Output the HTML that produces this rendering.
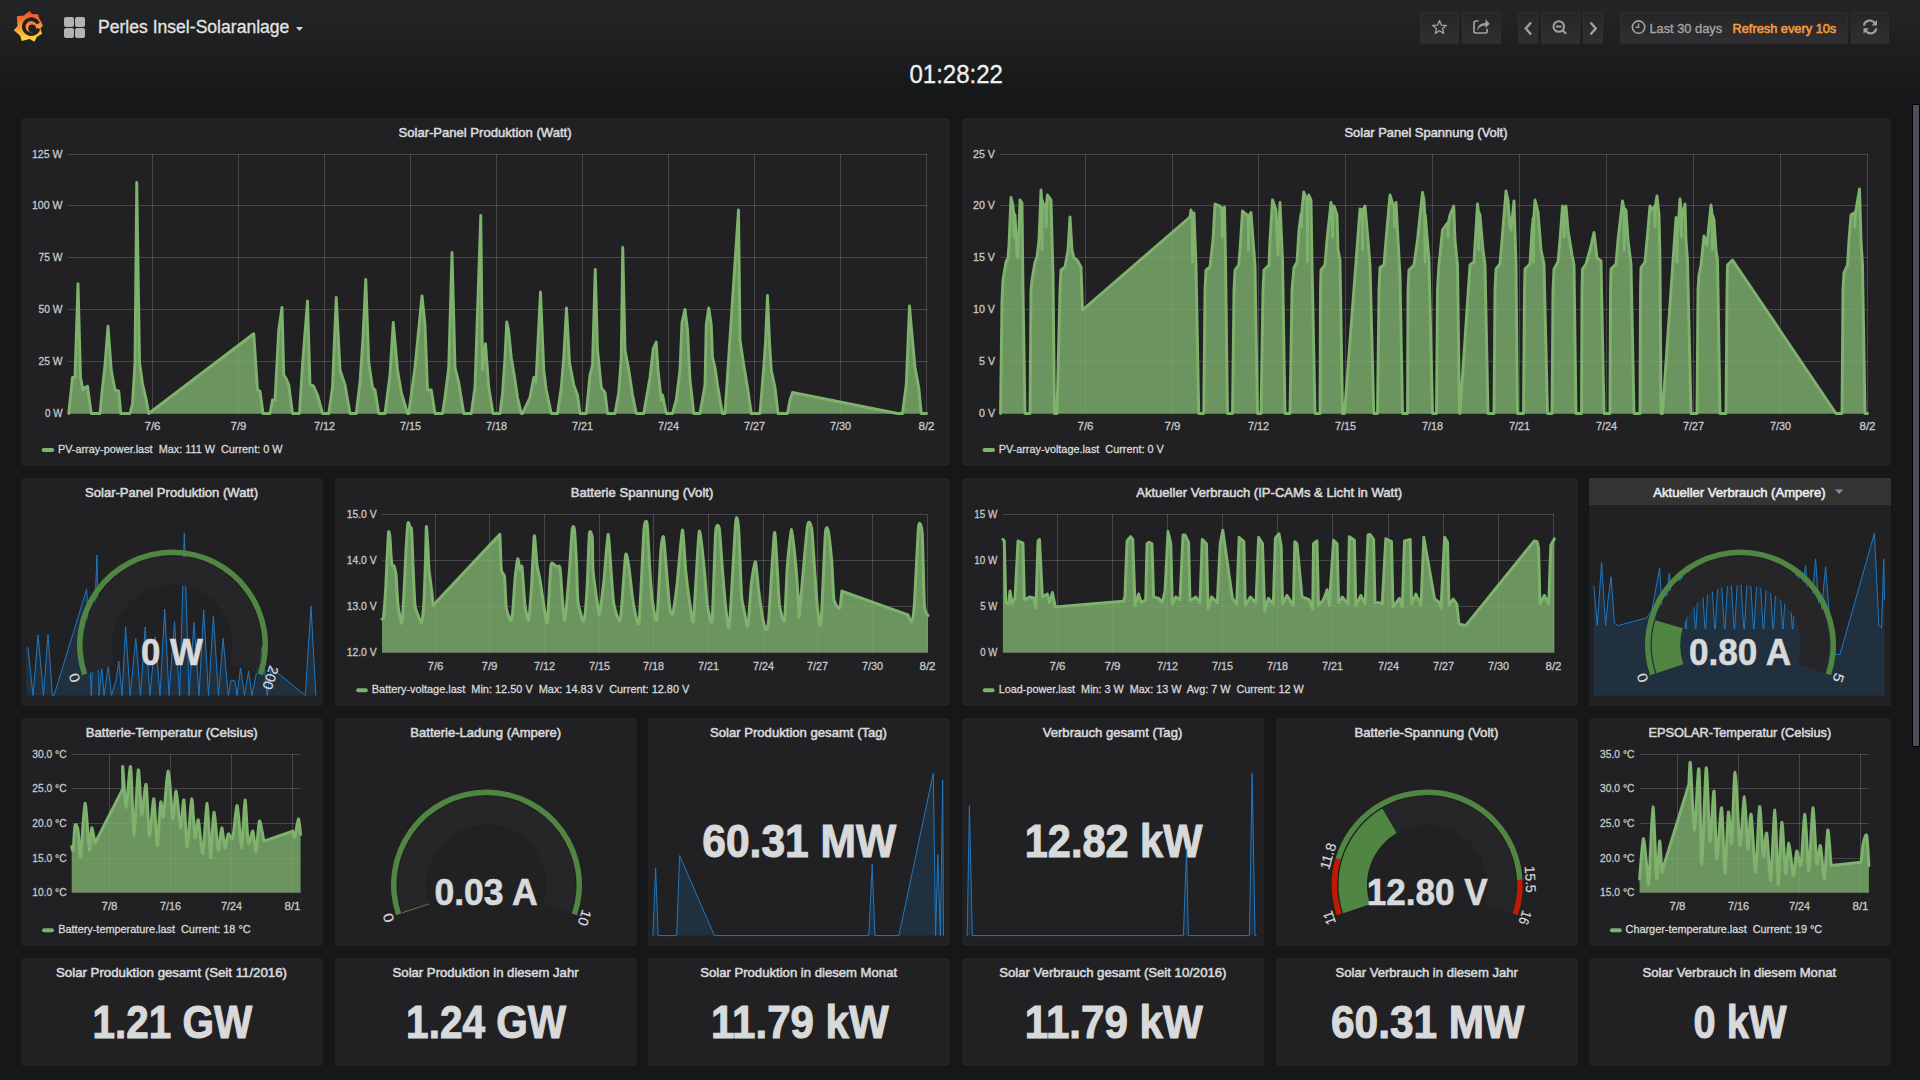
<!DOCTYPE html>
<html><head><meta charset="utf-8"><title>Perles Insel-Solaranlage - Grafana</title>
<style>
html,body{margin:0;padding:0;}
body{width:1920px;height:1080px;overflow:hidden;position:relative;background:#161719;
 background-image:linear-gradient(180deg,#222426 10px,#161719 100px);font-family:"Liberation Sans", sans-serif;}
.abs{position:absolute;}
.panel{position:absolute;background:#212124;border:1px solid #141414;border-radius:3px;overflow:hidden;}
.panel svg{position:absolute;left:0;top:0;}
svg text{font-family:"Liberation Sans", sans-serif;white-space:pre;}
.btn{position:absolute;top:12px;height:30px;border:1px solid #2f2f32;border-radius:2px;
 background:linear-gradient(180deg,#262628,#303033);}
.scroll{position:absolute;left:1912px;top:104px;width:6px;height:641px;border:1px solid #000;border-radius:1px;
 background:linear-gradient(90deg,#474c62,#505053);}
</style></head><body>
<div class="navbar"><svg class="abs" style="left:10px;top:8px" width="38" height="38" viewBox="0 0 1080 1080">
<defs><linearGradient id="lg" x1="0" y1="0.08" x2="0" y2="0.9"><stop offset="0" stop-color="#f4552c"/><stop offset="1" stop-color="#fdd235"/></linearGradient>
<clipPath id="gc"><path d="M555,85 L625,170 L795,180 L830,300 L900,420 L935,500 L865,580 L915,730 L770,815 L690,960 L560,880 L330,935 L290,790 L110,630 L215,515 L195,235 L390,215 Z"/></clipPath></defs>
<path fill="url(#lg)" d="M555,85 L625,170 L795,180 L830,300 L900,420 L935,500 L865,580 L915,730 L770,815 L690,960 L560,880 L330,935 L290,790 L110,630 L215,515 L195,235 L390,215 Z"/>
<g clip-path="url(#gc)" fill="#202123">
<path d="M845.17,418.01 A265,265 0 1 0 860.97,598.59 L759.55,571.41 A160,160 0 1 1 750.01,462.38 Z"/>
<circle cx="630" cy="580" r="110"/>
<path d="M796.43,614.08 A175,175 0 0 1 684.08,726.43 L660.9,655.11 A100,100 0 0 0 725.11,590.9 Z"/>
</g>
</svg><svg class="abs" style="left:64px;top:17px" width="21" height="21" viewBox="0 0 21 21" fill="#b3b3b3">
<rect x="0" y="0" width="10" height="10" rx="2"/><rect x="11" y="0" width="10" height="10" rx="2"/>
<rect x="0" y="11" width="10" height="10" rx="2"/><rect x="11" y="11" width="10" height="10" rx="2"/></svg><div class="btn" style="left:1420px;width:37px"></div><div class="btn" style="left:1462px;width:37px"></div><div class="btn" style="left:1518px;width:18px"></div><div class="btn" style="left:1541px;width:37px"></div><div class="btn" style="left:1583px;width:18px"></div><div class="btn" style="left:1620px;width:226px"></div><div class="btn" style="left:1851px;width:36px"></div><svg class="abs" style="left:0;top:0" width="1920" height="100" viewBox="0 0 1920 100"><text x="98" y="32.8" font-size="18" font-weight="400" fill="#e3e3e3" stroke="#e3e3e3" stroke-width="0.3" textLength="191.4" lengthAdjust="spacingAndGlyphs">Perles Insel-Solaranlage</text><path d="M296,27 L303,27 L299.5,31 Z" fill="#d8d9da"/><text x="909.4" y="83.1" font-size="26" font-weight="400" fill="#f0f0f0" stroke="#f0f0f0" stroke-width="0.3" textLength="93.6" lengthAdjust="spacingAndGlyphs">01:28:22</text><path d="M1439.5,20.5 L1441.4,25.2 L1446.3,25.5 L1442.5,28.6 L1443.7,33.4 L1439.5,30.7 L1435.3,33.4 L1436.5,28.6 L1432.7,25.5 L1437.6,25.2 Z" fill="none" stroke="#a0a0a0" stroke-width="1.3" stroke-linejoin="round"/><path d="M1478.5,21 H1475.8 Q1474,21 1474,22.8 V31.2 Q1474,33 1475.8,33 H1485.3 Q1487.1,33 1487.1,31.2 V28.8" fill="none" stroke="#a0a0a0" stroke-width="1.7"/><path d="M1477.3,30.8 C1477.3,25.8 1480.3,23 1485.5,23 V19.2 L1489.6,23.7 L1485.5,28.2 V25.6 C1481.5,25.6 1478.8,27.2 1477.3,30.8 Z" fill="#a0a0a0"/><path d="M1531,22.5 L1525.8,28.5 L1531,34.5" fill="none" stroke="#a0a0a0" stroke-width="2.4"/><path d="M1590.5,22.5 L1595.7,28.5 L1590.5,34.5" fill="none" stroke="#a0a0a0" stroke-width="2.4"/><circle cx="1558.8" cy="26.5" r="5.3" fill="none" stroke="#a0a0a0" stroke-width="2"/><path d="M1556,26.5 h5.6 M1562.5,30.2 l3.6,3.6" stroke="#a0a0a0" stroke-width="2"/><circle cx="1638.6" cy="27.1" r="6.2" fill="none" stroke="#a0a0a0" stroke-width="1.6"/><path d="M1638.6,23.5 v3.8 h-3" fill="none" stroke="#a0a0a0" stroke-width="1.4"/><text x="1649.4" y="32.75" font-size="12.5" font-weight="400" fill="#a7a7a7" stroke="#a7a7a7" stroke-width="0.3" textLength="72.8" lengthAdjust="spacingAndGlyphs">Last 30 days</text><text x="1732.5" y="32.75" font-size="12.5" font-weight="400" fill="#f99a3a" stroke="#f99a3a" stroke-width="0.55" textLength="103.75" lengthAdjust="spacingAndGlyphs">Refresh every 10s</text><path d="M1864,25.5 A5.8,5.8 0 0 1 1874.8,23.5" fill="none" stroke="#a0a0a0" stroke-width="2.2"/><path d="M1877,20 v5.5 h-5.5 Z" fill="#a0a0a0"/><path d="M1876.3,28.5 A5.8,5.8 0 0 1 1865.5,30.3" fill="none" stroke="#a0a0a0" stroke-width="2.2"/><path d="M1863.5,33.8 v-5.5 h5.5 Z" fill="#a0a0a0"/></svg></div>
<div class="panel" style="left:20px;top:117px;width:929px;height:348px"><svg width="929" height="348" viewBox="21 118 929 348"><text x="398.5" y="137" font-size="13" font-weight="400" fill="#d8d9da" stroke="#d8d9da" stroke-width="0.55" textLength="173" lengthAdjust="spacingAndGlyphs">Solar-Panel Produktion (Watt)</text><path d="M68,154.5 H927 M68,205.5 H927 M68,257.5 H927 M68,309.5 H927 M68,361.5 H927 M68,413.5 H927" stroke="rgba(255,255,255,0.17)" stroke-width="1" fill="none"/>
<path d="M152.5,154 V414 M238.5,154 V414 M324.5,154 V414 M410.5,154 V414 M496.5,154 V414 M582.5,154 V414 M668.5,154 V414 M754.5,154 V414 M840.5,154 V414 M926.5,154 V414" stroke="rgba(255,255,255,0.17)" stroke-width="1" fill="none"/>
<path d="M68.75,413.5 L68.75,413.5 L72.5,377.5 L75,377.5 L78,283.75 L80.5,377.5 L83,390 L85,387.5 L87.5,386.25 L91.25,413.5 L100,413.5 L102,392.5 L105,365 L108,326.25 L111.25,370 L115,390 L118.75,391.25 L120.75,413.5 L130,413.5 L132.5,403.75 L135,362.5 L136.75,182.5 L139.5,362.5 L142.5,383.75 L146.25,400 L148.75,413.5 L253.75,333.75 L257.5,390 L260,391 L263,413.5 L270,413.5 L272.5,400 L275,400 L278.75,330 L282,307.5 L283.75,375 L286.25,378.75 L288.75,385 L292.5,413.5 L299.5,413.5 L302.5,365 L307.5,301 L310,385 L313.5,386 L317.5,395 L322.5,413.5 L328.75,413.5 L332.5,387.5 L336.25,297.5 L340,370 L345,385 L350,413.5 L356.25,413.5 L360,382.5 L363,337.5 L365.75,279.5 L368.75,362.5 L372.5,387.5 L375,390 L378.75,413.5 L385,413.5 L390,375 L393.25,322.5 L397.5,370 L401.25,392.5 L407.5,413.5 L408.75,413.5 L415,367.5 L422,296 L425,325 L427.5,390 L431.25,390 L435,413.5 L442.5,413.5 L445,397.5 L448.75,367.5 L452,252.5 L455,367.5 L458.75,382.5 L463.75,413.5 L471.25,413.5 L475,387.5 L480.75,215.5 L482.5,370 L485.5,343.75 L488.75,387.5 L493,413.5 L500,413.5 L502.5,393.75 L505,357.5 L506.75,322 L508.5,330 L511.25,357.5 L515,380 L517.5,397.5 L521.25,413.5 L522.5,413.5 L530,397.5 L533.75,377.5 L536,382 L540.5,292 L543.75,370 L546.25,390 L551.25,413.5 L557.5,413.5 L561.25,387.5 L563.75,357.5 L566.5,308 L569.5,362.5 L573.75,385 L577.5,395 L580,413.5 L586.25,413.5 L590,375 L592.5,365 L595.25,269.5 L597.5,350 L601.25,387.5 L605,392.5 L607.5,413.5 L615,413.5 L618.75,392.5 L621.25,357.5 L622.75,247.5 L625,350 L628.75,370 L632.5,395 L636.25,413.5 L643.75,413.5 L650,377.5 L653.25,348.75 L656.25,342 L658,370 L661.25,400 L662.5,395 L666.25,413.5 L672.5,413.5 L676.25,400 L680,370 L682,322.5 L685,309.5 L687.5,330 L690,380 L693.75,413.5 L700,413.5 L705,385 L706.25,325 L708.75,308 L711.25,325 L712.5,357.5 L715,367.5 L717.5,385 L720,400 L722.5,413.5 L725,413.5 L738.5,210 L740,340 L743.75,365 L747.5,387.5 L751.25,413.5 L760,413.5 L763.75,367.5 L765.5,342.5 L767.5,295.5 L769.5,342.5 L771.25,370 L775,387.5 L778,413.5 L787.5,413.5 L790,400 L792.5,392.5 L897.5,413.5 L902.5,413.5 L906.25,385 L909.5,306 L912,335 L915,367.5 L918.75,387.5 L921.25,413.5 L926.5,413.5 L926.5,413.5 Z" fill="rgba(126,178,109,0.8)"/>
<path d="M68.75,413.5 L72.5,377.5 L75,377.5 L78,283.75 L80.5,377.5 L83,390 L85,387.5 L87.5,386.25 L91.25,413.5 L100,413.5 L102,392.5 L105,365 L108,326.25 L111.25,370 L115,390 L118.75,391.25 L120.75,413.5 L130,413.5 L132.5,403.75 L135,362.5 L136.75,182.5 L139.5,362.5 L142.5,383.75 L146.25,400 L148.75,413.5 L253.75,333.75 L257.5,390 L260,391 L263,413.5 L270,413.5 L272.5,400 L275,400 L278.75,330 L282,307.5 L283.75,375 L286.25,378.75 L288.75,385 L292.5,413.5 L299.5,413.5 L302.5,365 L307.5,301 L310,385 L313.5,386 L317.5,395 L322.5,413.5 L328.75,413.5 L332.5,387.5 L336.25,297.5 L340,370 L345,385 L350,413.5 L356.25,413.5 L360,382.5 L363,337.5 L365.75,279.5 L368.75,362.5 L372.5,387.5 L375,390 L378.75,413.5 L385,413.5 L390,375 L393.25,322.5 L397.5,370 L401.25,392.5 L407.5,413.5 L408.75,413.5 L415,367.5 L422,296 L425,325 L427.5,390 L431.25,390 L435,413.5 L442.5,413.5 L445,397.5 L448.75,367.5 L452,252.5 L455,367.5 L458.75,382.5 L463.75,413.5 L471.25,413.5 L475,387.5 L480.75,215.5 L482.5,370 L485.5,343.75 L488.75,387.5 L493,413.5 L500,413.5 L502.5,393.75 L505,357.5 L506.75,322 L508.5,330 L511.25,357.5 L515,380 L517.5,397.5 L521.25,413.5 L522.5,413.5 L530,397.5 L533.75,377.5 L536,382 L540.5,292 L543.75,370 L546.25,390 L551.25,413.5 L557.5,413.5 L561.25,387.5 L563.75,357.5 L566.5,308 L569.5,362.5 L573.75,385 L577.5,395 L580,413.5 L586.25,413.5 L590,375 L592.5,365 L595.25,269.5 L597.5,350 L601.25,387.5 L605,392.5 L607.5,413.5 L615,413.5 L618.75,392.5 L621.25,357.5 L622.75,247.5 L625,350 L628.75,370 L632.5,395 L636.25,413.5 L643.75,413.5 L650,377.5 L653.25,348.75 L656.25,342 L658,370 L661.25,400 L662.5,395 L666.25,413.5 L672.5,413.5 L676.25,400 L680,370 L682,322.5 L685,309.5 L687.5,330 L690,380 L693.75,413.5 L700,413.5 L705,385 L706.25,325 L708.75,308 L711.25,325 L712.5,357.5 L715,367.5 L717.5,385 L720,400 L722.5,413.5 L725,413.5 L738.5,210 L740,340 L743.75,365 L747.5,387.5 L751.25,413.5 L760,413.5 L763.75,367.5 L765.5,342.5 L767.5,295.5 L769.5,342.5 L771.25,370 L775,387.5 L778,413.5 L787.5,413.5 L790,400 L792.5,392.5 L897.5,413.5 L902.5,413.5 L906.25,385 L909.5,306 L912,335 L915,367.5 L918.75,387.5 L921.25,413.5 L926.5,413.5" stroke="#7eb26d" stroke-width="2.9" fill="none" stroke-linejoin="round" stroke-linecap="round"/>
<text x="32" y="157.8" font-size="11.5" font-weight="400" fill="#c8c9ca" stroke="#c8c9ca" stroke-width="0.3" textLength="30.5" lengthAdjust="spacingAndGlyphs">125 W</text>
<text x="32" y="208.8" font-size="11.5" font-weight="400" fill="#c8c9ca" stroke="#c8c9ca" stroke-width="0.3" textLength="30.5" lengthAdjust="spacingAndGlyphs">100 W</text>
<text x="38.5" y="260.8" font-size="11.5" font-weight="400" fill="#c8c9ca" stroke="#c8c9ca" stroke-width="0.3" textLength="24" lengthAdjust="spacingAndGlyphs">75 W</text>
<text x="38.5" y="312.8" font-size="11.5" font-weight="400" fill="#c8c9ca" stroke="#c8c9ca" stroke-width="0.3" textLength="24" lengthAdjust="spacingAndGlyphs">50 W</text>
<text x="38.5" y="364.8" font-size="11.5" font-weight="400" fill="#c8c9ca" stroke="#c8c9ca" stroke-width="0.3" textLength="24" lengthAdjust="spacingAndGlyphs">25 W</text>
<text x="45" y="416.8" font-size="11.5" font-weight="400" fill="#c8c9ca" stroke="#c8c9ca" stroke-width="0.3" textLength="17.5" lengthAdjust="spacingAndGlyphs">0 W</text>
<text x="144.5" y="430" font-size="11.5" font-weight="400" fill="#c8c9ca" stroke="#c8c9ca" stroke-width="0.3" textLength="16" lengthAdjust="spacingAndGlyphs">7/6</text>
<text x="230.5" y="430" font-size="11.5" font-weight="400" fill="#c8c9ca" stroke="#c8c9ca" stroke-width="0.3" textLength="16" lengthAdjust="spacingAndGlyphs">7/9</text>
<text x="314" y="430" font-size="11.5" font-weight="400" fill="#c8c9ca" stroke="#c8c9ca" stroke-width="0.3" textLength="21" lengthAdjust="spacingAndGlyphs">7/12</text>
<text x="400" y="430" font-size="11.5" font-weight="400" fill="#c8c9ca" stroke="#c8c9ca" stroke-width="0.3" textLength="21" lengthAdjust="spacingAndGlyphs">7/15</text>
<text x="486" y="430" font-size="11.5" font-weight="400" fill="#c8c9ca" stroke="#c8c9ca" stroke-width="0.3" textLength="21" lengthAdjust="spacingAndGlyphs">7/18</text>
<text x="572" y="430" font-size="11.5" font-weight="400" fill="#c8c9ca" stroke="#c8c9ca" stroke-width="0.3" textLength="21" lengthAdjust="spacingAndGlyphs">7/21</text>
<text x="658" y="430" font-size="11.5" font-weight="400" fill="#c8c9ca" stroke="#c8c9ca" stroke-width="0.3" textLength="21" lengthAdjust="spacingAndGlyphs">7/24</text>
<text x="744" y="430" font-size="11.5" font-weight="400" fill="#c8c9ca" stroke="#c8c9ca" stroke-width="0.3" textLength="21" lengthAdjust="spacingAndGlyphs">7/27</text>
<text x="830" y="430" font-size="11.5" font-weight="400" fill="#c8c9ca" stroke="#c8c9ca" stroke-width="0.3" textLength="21" lengthAdjust="spacingAndGlyphs">7/30</text>
<text x="918.5" y="430" font-size="11.5" font-weight="400" fill="#c8c9ca" stroke="#c8c9ca" stroke-width="0.3" textLength="16" lengthAdjust="spacingAndGlyphs">8/2</text><rect x="41.7" y="448" width="12.5" height="4" rx="2" fill="#7eb26d"/><text x="57.9" y="453" font-size="11.5" font-weight="400" fill="#d8d9da" stroke="#d8d9da" stroke-width="0.3" textLength="224.6" lengthAdjust="spacingAndGlyphs">PV-array-power.last  Max: 111 W  Current: 0 W</text></svg></div>
<div class="panel" style="left:961px;top:117px;width:929px;height:348px"><svg width="929" height="348" viewBox="962 118 929 348"><text x="1344.5" y="137" font-size="13" font-weight="400" fill="#d8d9da" stroke="#d8d9da" stroke-width="0.55" textLength="163" lengthAdjust="spacingAndGlyphs">Solar Panel Spannung (Volt)</text><path d="M1000,154.5 H1868 M1000,205.5 H1868 M1000,257.5 H1868 M1000,309.5 H1868 M1000,361.5 H1868 M1000,413.5 H1868" stroke="rgba(255,255,255,0.17)" stroke-width="1" fill="none"/>
<path d="M1085.5,154 V414 M1172.5,154 V414 M1258.5,154 V414 M1345.5,154 V414 M1432.5,154 V414 M1519.5,154 V414 M1606.5,154 V414 M1693.5,154 V414 M1780.5,154 V414 M1867.5,154 V414" stroke="rgba(255,255,255,0.17)" stroke-width="1" fill="none"/>
<path d="M1000.5,413.5 L1000.5,413.5 L1002,300 L1003,280 L1006,262 L1008,258 L1009,245 L1011,197.5 L1013,206 L1013.7,213.5 L1014,237 L1014.3,213.5 L1015,215 L1017,255 L1018,258 L1020,200 L1022,203 L1023,290 L1025,413.5 L1030,413.5 L1031,290 L1032,280 L1035,262 L1037,257 L1039,240 L1041,190 L1041.7,200.5 L1042,250 L1042.3,200.5 L1043,205 L1045,207 L1045.95,204 L1046.25,227 L1046.55,204 L1047.5,195 L1051,200 L1053,275 L1054.5,413.5 L1057,413.5 L1060,290 L1061,270 L1065,267 L1068,250 L1070,217 L1072,250 L1074,258 L1077,260 L1081,267 L1082.5,310 L1190,217 L1191,210 L1192.2,214.5 L1192.5,262 L1192.8,214.5 L1194,213 L1196,265 L1198.75,413.5 L1203.75,413.5 L1205,290 L1206,270 L1210,267 L1213,240 L1215,204 L1220,206 L1221.95,209.5 L1222.25,237 L1222.55,209.5 L1224.5,207 L1225.5,260 L1227.5,413.5 L1232.5,413.5 L1234,290 L1235,270 L1238.75,265 L1240,250 L1242.5,211 L1246,214 L1248.2,216.25 L1248.5,250 L1248.8,216.25 L1251,212.5 L1253,240 L1255,265 L1257.5,413.5 L1261,413.5 L1263,290 L1264,270 L1269,265 L1270,240 L1272.5,200 L1276,210 L1278,255 L1280,202.5 L1282.5,260 L1285,413.5 L1290,413.5 L1292,290 L1294,267.5 L1297,262 L1299,230 L1301.08,214 L1301.38,227 L1301.67,214 L1303.75,192 L1306,198 L1307.08,199.5 L1307.38,262 L1307.67,199.5 L1308.75,195 L1311,200 L1312,262.5 L1315,413.5 L1320,413.5 L1320.5,290 L1321,270 L1325,265 L1327,240 L1331,202.5 L1332.2,207.25 L1332.5,237 L1332.8,207.25 L1334,206 L1337,215 L1338,250 L1340,260 L1342.5,413.5 L1344.5,413.5 L1360,209 L1362.2,210.5 L1362.5,250 L1362.8,210.5 L1365,206 L1368,240 L1370,265 L1373.75,413.5 L1377.5,413.5 L1379,290 L1380,267.5 L1384,265 L1386,240 L1390,195 L1393,205 L1394.2,206.75 L1394.5,227 L1394.8,206.75 L1396,202.5 L1398,240 L1400,275 L1402.5,413.5 L1407.5,413.5 L1408,290 L1409,270 L1414,265 L1417.5,240 L1422.5,192.5 L1424,200 L1424.7,215 L1425,262 L1425.3,215 L1426,224 L1429,260 L1432.5,413.5 L1436.5,413.5 L1437.5,290 L1438.75,267.5 L1442.5,230 L1446,225 L1447.7,223 L1448,237 L1448.3,223 L1450,215 L1453.75,206 L1455,240 L1457.5,265 L1459.5,413.5 L1460,413.5 L1470,265 L1474,262 L1477.5,204 L1478.45,212.5 L1478.75,250 L1479.05,212.5 L1480,215 L1483,250 L1485,265 L1488,413.5 L1494,413.5 L1495,290 L1496,269 L1500,264 L1502,240 L1506,191 L1508,200 L1509.2,218 L1509.5,227 L1509.8,218 L1511,230 L1514,201 L1516,265 L1517.5,413.5 L1523.5,413.5 L1524.5,290 L1525,269 L1530,264 L1532,230 L1533.2,218 L1533.5,262 L1533.8,218 L1535,200 L1538,212 L1541,250 L1544,264 L1547.5,413.5 L1552,413.5 L1553,290 L1554,269 L1558,262 L1560,240 L1562.5,206 L1563.95,209 L1564.25,237 L1564.55,209 L1566,206 L1568,230 L1572,255 L1574,265 L1576,413.5 L1581.5,413.5 L1582,290 L1582.5,269 L1586,264 L1590,250 L1594,232.5 L1597,258 L1601,261 L1604,413.5 L1610,413.5 L1610.5,290 L1611,269 L1616,264 L1618,240 L1622.5,201 L1623.95,208.5 L1624.25,250 L1624.55,208.5 L1626,210 L1628,240 L1631,264 L1634,413.5 L1640,413.5 L1640.5,290 L1641,267.5 L1645,262 L1647,240 L1650,206 L1653,210 L1654.7,206 L1655,227 L1655.3,206 L1657,196 L1659,215 L1660,260 L1661,413.5 L1662.5,413.5 L1676,217.5 L1676.7,226.75 L1677,262 L1677.3,226.75 L1678,230 L1680,199 L1681.2,210 L1681.5,237 L1681.8,210 L1683,215 L1685,204 L1686,240 L1687.5,260 L1691,413.5 L1697,413.5 L1698,290 L1699,275 L1701,265 L1704,236 L1707,245 L1711,205 L1712.2,215.5 L1712.5,250 L1712.8,215.5 L1714,220 L1716,250 L1717.5,260 L1720,413.5 L1726,413.5 L1727,290 L1727.5,265 L1732.5,260 L1836,413.5 L1842,413.5 L1843,290 L1844,272.5 L1847.5,265 L1849,240 L1851,215 L1854,213 L1854.7,214.5 L1855,227 L1855.3,214.5 L1856,210 L1859.5,189 L1861,240 L1862.5,265 L1865,413.5 L1867.5,413.5 L1867.5,413.5 Z" fill="rgba(126,178,109,0.8)"/>
<path d="M1000.5,413.5 L1002,300 L1003,280 L1006,262 L1008,258 L1009,245 L1011,197.5 L1013,206 L1013.7,213.5 L1014,237 L1014.3,213.5 L1015,215 L1017,255 L1018,258 L1020,200 L1022,203 L1023,290 L1025,413.5 L1030,413.5 L1031,290 L1032,280 L1035,262 L1037,257 L1039,240 L1041,190 L1041.7,200.5 L1042,250 L1042.3,200.5 L1043,205 L1045,207 L1045.95,204 L1046.25,227 L1046.55,204 L1047.5,195 L1051,200 L1053,275 L1054.5,413.5 L1057,413.5 L1060,290 L1061,270 L1065,267 L1068,250 L1070,217 L1072,250 L1074,258 L1077,260 L1081,267 L1082.5,310 L1190,217 L1191,210 L1192.2,214.5 L1192.5,262 L1192.8,214.5 L1194,213 L1196,265 L1198.75,413.5 L1203.75,413.5 L1205,290 L1206,270 L1210,267 L1213,240 L1215,204 L1220,206 L1221.95,209.5 L1222.25,237 L1222.55,209.5 L1224.5,207 L1225.5,260 L1227.5,413.5 L1232.5,413.5 L1234,290 L1235,270 L1238.75,265 L1240,250 L1242.5,211 L1246,214 L1248.2,216.25 L1248.5,250 L1248.8,216.25 L1251,212.5 L1253,240 L1255,265 L1257.5,413.5 L1261,413.5 L1263,290 L1264,270 L1269,265 L1270,240 L1272.5,200 L1276,210 L1278,255 L1280,202.5 L1282.5,260 L1285,413.5 L1290,413.5 L1292,290 L1294,267.5 L1297,262 L1299,230 L1301.08,214 L1301.38,227 L1301.67,214 L1303.75,192 L1306,198 L1307.08,199.5 L1307.38,262 L1307.67,199.5 L1308.75,195 L1311,200 L1312,262.5 L1315,413.5 L1320,413.5 L1320.5,290 L1321,270 L1325,265 L1327,240 L1331,202.5 L1332.2,207.25 L1332.5,237 L1332.8,207.25 L1334,206 L1337,215 L1338,250 L1340,260 L1342.5,413.5 L1344.5,413.5 L1360,209 L1362.2,210.5 L1362.5,250 L1362.8,210.5 L1365,206 L1368,240 L1370,265 L1373.75,413.5 L1377.5,413.5 L1379,290 L1380,267.5 L1384,265 L1386,240 L1390,195 L1393,205 L1394.2,206.75 L1394.5,227 L1394.8,206.75 L1396,202.5 L1398,240 L1400,275 L1402.5,413.5 L1407.5,413.5 L1408,290 L1409,270 L1414,265 L1417.5,240 L1422.5,192.5 L1424,200 L1424.7,215 L1425,262 L1425.3,215 L1426,224 L1429,260 L1432.5,413.5 L1436.5,413.5 L1437.5,290 L1438.75,267.5 L1442.5,230 L1446,225 L1447.7,223 L1448,237 L1448.3,223 L1450,215 L1453.75,206 L1455,240 L1457.5,265 L1459.5,413.5 L1460,413.5 L1470,265 L1474,262 L1477.5,204 L1478.45,212.5 L1478.75,250 L1479.05,212.5 L1480,215 L1483,250 L1485,265 L1488,413.5 L1494,413.5 L1495,290 L1496,269 L1500,264 L1502,240 L1506,191 L1508,200 L1509.2,218 L1509.5,227 L1509.8,218 L1511,230 L1514,201 L1516,265 L1517.5,413.5 L1523.5,413.5 L1524.5,290 L1525,269 L1530,264 L1532,230 L1533.2,218 L1533.5,262 L1533.8,218 L1535,200 L1538,212 L1541,250 L1544,264 L1547.5,413.5 L1552,413.5 L1553,290 L1554,269 L1558,262 L1560,240 L1562.5,206 L1563.95,209 L1564.25,237 L1564.55,209 L1566,206 L1568,230 L1572,255 L1574,265 L1576,413.5 L1581.5,413.5 L1582,290 L1582.5,269 L1586,264 L1590,250 L1594,232.5 L1597,258 L1601,261 L1604,413.5 L1610,413.5 L1610.5,290 L1611,269 L1616,264 L1618,240 L1622.5,201 L1623.95,208.5 L1624.25,250 L1624.55,208.5 L1626,210 L1628,240 L1631,264 L1634,413.5 L1640,413.5 L1640.5,290 L1641,267.5 L1645,262 L1647,240 L1650,206 L1653,210 L1654.7,206 L1655,227 L1655.3,206 L1657,196 L1659,215 L1660,260 L1661,413.5 L1662.5,413.5 L1676,217.5 L1676.7,226.75 L1677,262 L1677.3,226.75 L1678,230 L1680,199 L1681.2,210 L1681.5,237 L1681.8,210 L1683,215 L1685,204 L1686,240 L1687.5,260 L1691,413.5 L1697,413.5 L1698,290 L1699,275 L1701,265 L1704,236 L1707,245 L1711,205 L1712.2,215.5 L1712.5,250 L1712.8,215.5 L1714,220 L1716,250 L1717.5,260 L1720,413.5 L1726,413.5 L1727,290 L1727.5,265 L1732.5,260 L1836,413.5 L1842,413.5 L1843,290 L1844,272.5 L1847.5,265 L1849,240 L1851,215 L1854,213 L1854.7,214.5 L1855,227 L1855.3,214.5 L1856,210 L1859.5,189 L1861,240 L1862.5,265 L1865,413.5 L1867.5,413.5" stroke="#7eb26d" stroke-width="2.9" fill="none" stroke-linejoin="round" stroke-linecap="round"/>
<text x="973" y="157.8" font-size="11.5" font-weight="400" fill="#c8c9ca" stroke="#c8c9ca" stroke-width="0.3" textLength="22" lengthAdjust="spacingAndGlyphs">25 V</text>
<text x="973" y="208.8" font-size="11.5" font-weight="400" fill="#c8c9ca" stroke="#c8c9ca" stroke-width="0.3" textLength="22" lengthAdjust="spacingAndGlyphs">20 V</text>
<text x="973" y="260.8" font-size="11.5" font-weight="400" fill="#c8c9ca" stroke="#c8c9ca" stroke-width="0.3" textLength="22" lengthAdjust="spacingAndGlyphs">15 V</text>
<text x="973" y="312.8" font-size="11.5" font-weight="400" fill="#c8c9ca" stroke="#c8c9ca" stroke-width="0.3" textLength="22" lengthAdjust="spacingAndGlyphs">10 V</text>
<text x="979" y="364.8" font-size="11.5" font-weight="400" fill="#c8c9ca" stroke="#c8c9ca" stroke-width="0.3" textLength="16" lengthAdjust="spacingAndGlyphs">5 V</text>
<text x="979" y="416.8" font-size="11.5" font-weight="400" fill="#c8c9ca" stroke="#c8c9ca" stroke-width="0.3" textLength="16" lengthAdjust="spacingAndGlyphs">0 V</text>
<text x="1077.5" y="430" font-size="11.5" font-weight="400" fill="#c8c9ca" stroke="#c8c9ca" stroke-width="0.3" textLength="16" lengthAdjust="spacingAndGlyphs">7/6</text>
<text x="1164.5" y="430" font-size="11.5" font-weight="400" fill="#c8c9ca" stroke="#c8c9ca" stroke-width="0.3" textLength="16" lengthAdjust="spacingAndGlyphs">7/9</text>
<text x="1248" y="430" font-size="11.5" font-weight="400" fill="#c8c9ca" stroke="#c8c9ca" stroke-width="0.3" textLength="21" lengthAdjust="spacingAndGlyphs">7/12</text>
<text x="1335" y="430" font-size="11.5" font-weight="400" fill="#c8c9ca" stroke="#c8c9ca" stroke-width="0.3" textLength="21" lengthAdjust="spacingAndGlyphs">7/15</text>
<text x="1422" y="430" font-size="11.5" font-weight="400" fill="#c8c9ca" stroke="#c8c9ca" stroke-width="0.3" textLength="21" lengthAdjust="spacingAndGlyphs">7/18</text>
<text x="1509" y="430" font-size="11.5" font-weight="400" fill="#c8c9ca" stroke="#c8c9ca" stroke-width="0.3" textLength="21" lengthAdjust="spacingAndGlyphs">7/21</text>
<text x="1596" y="430" font-size="11.5" font-weight="400" fill="#c8c9ca" stroke="#c8c9ca" stroke-width="0.3" textLength="21" lengthAdjust="spacingAndGlyphs">7/24</text>
<text x="1683" y="430" font-size="11.5" font-weight="400" fill="#c8c9ca" stroke="#c8c9ca" stroke-width="0.3" textLength="21" lengthAdjust="spacingAndGlyphs">7/27</text>
<text x="1770" y="430" font-size="11.5" font-weight="400" fill="#c8c9ca" stroke="#c8c9ca" stroke-width="0.3" textLength="21" lengthAdjust="spacingAndGlyphs">7/30</text>
<text x="1859.5" y="430" font-size="11.5" font-weight="400" fill="#c8c9ca" stroke="#c8c9ca" stroke-width="0.3" textLength="16" lengthAdjust="spacingAndGlyphs">8/2</text><rect x="982.5" y="448" width="12.5" height="4" rx="2" fill="#7eb26d"/><text x="998.75" y="453" font-size="11.5" font-weight="400" fill="#d8d9da" stroke="#d8d9da" stroke-width="0.3" textLength="165" lengthAdjust="spacingAndGlyphs">PV-array-voltage.last  Current: 0 V</text></svg></div>
<div class="panel" style="left:20px;top:477px;width:302px;height:228px"><svg width="302" height="228" viewBox="21 478 302 228"><text x="85" y="497" font-size="13" font-weight="400" fill="#d8d9da" stroke="#d8d9da" stroke-width="0.55" textLength="173" lengthAdjust="spacingAndGlyphs">Solar-Panel Produktion (Watt)</text><path d="M26.2,695.5 L26.2,648 L28,648 L33,695.5 L38.1,635 L43.5,695.5 L48,634.3 L52.4,695.5 L54,695.5 L86.7,589 L91.3,695.5 L97,555 L99,695.5 L101.8,667.6 L104,695.5 L108.3,666 L111.5,695.5 L116,680 L118.8,661 L122,695.5 L125.6,627 L130.2,695.5 L135.8,638.4 L140.5,695.5 L145.2,627 L150,695.5 L155.3,636.8 L160,695.5 L164.7,609 L169,695.5 L174.5,621.4 L179.7,695.5 L184.3,533 L189,695.5 L194,622.2 L199,695.5 L203.7,610 L208.5,695.5 L213.4,615.7 L218.5,695.5 L223.1,638.4 L228.3,695.5 L231,680 L235,681 L237,695.5 L240.5,667.6 L244.5,695.5 L248.6,670.8 L252,695.5 L257,670 L262.3,646.5 L267.2,695.5 L271.2,667.6 L305.3,695.5 L311,606 L315.8,695.5 L315.8,695.5 Z" fill="rgba(31,118,189,0.18)"/><path d="M26.2,648 L28,648 L33,695.5 L38.1,635 L43.5,695.5 L48,634.3 L52.4,695.5 L54,695.5 L86.7,589 L91.3,695.5 L97,555 L99,695.5 L101.8,667.6 L104,695.5 L108.3,666 L111.5,695.5 L116,680 L118.8,661 L122,695.5 L125.6,627 L130.2,695.5 L135.8,638.4 L140.5,695.5 L145.2,627 L150,695.5 L155.3,636.8 L160,695.5 L164.7,609 L169,695.5 L174.5,621.4 L179.7,695.5 L184.3,533 L189,695.5 L194,622.2 L199,695.5 L203.7,610 L208.5,695.5 L213.4,615.7 L218.5,695.5 L223.1,638.4 L228.3,695.5 L231,680 L235,681 L237,695.5 L240.5,667.6 L244.5,695.5 L248.6,670.8 L252,695.5 L257,670 L262.3,646.5 L267.2,695.5 L271.2,667.6 L305.3,695.5 L311,606 L315.8,695.5" stroke="rgb(31,120,193)" stroke-width="1" fill="none"/><path d="M88.38,673.14 A88.7,88.7 0 1 1 256.62,673.14 L229.68,664.13 A60.3,60.3 0 1 0 115.32,664.13 Z" fill="#262628"/>
<path d="M81.94,675.3 A95.5,95.5 0 1 1 263.06,675.3 L257.85,673.56 A90,90 0 1 0 87.15,673.56 Z" fill="#508642"/>
<g transform="translate(74.35,677.84) rotate(-108.5)"><text x="-4.5" y="5" font-size="14" font-weight="400" fill="#d8d9da" stroke="#d8d9da" stroke-width="0.2" textLength="9" lengthAdjust="spacingAndGlyphs">0</text></g>
<g transform="translate(270.65,677.84) rotate(108.5)"><text x="-12" y="5" font-size="14" font-weight="400" fill="#d8d9da" stroke="#d8d9da" stroke-width="0.2" textLength="24" lengthAdjust="spacingAndGlyphs">200</text></g><text x="140.9" y="664.7" font-size="36" font-weight="700" fill="#d8d9da" stroke="#d8d9da" stroke-width="0.6" textLength="61.8" lengthAdjust="spacingAndGlyphs">0 W</text></svg></div>
<div class="panel" style="left:334px;top:477px;width:615px;height:228px"><svg width="615" height="228" viewBox="335 478 615 228"><text x="570.7" y="497" font-size="13" font-weight="400" fill="#d8d9da" stroke="#d8d9da" stroke-width="0.55" textLength="142.6" lengthAdjust="spacingAndGlyphs">Batterie Spannung (Volt)</text><path d="M382,514.5 H927 M382,560.5 H927 M382,606.5 H927 M382,652.5 H927" stroke="rgba(255,255,255,0.17)" stroke-width="1" fill="none"/>
<path d="M435.5,514 V653 M489.5,514 V653 M544.5,514 V653 M599.5,514 V653 M653.5,514 V653 M708.5,514 V653 M763.5,514 V653 M817.5,514 V653 M872.5,514 V653 M927.5,514 V653" stroke="rgba(255,255,255,0.17)" stroke-width="1" fill="none"/>
<path d="M382,652.5 L382,619 C382.15,618.8 383.12,620.1 383.5,617 C383.88,613.9 385.4,593.7 385.75,588 C386.1,582.3 386.71,565.6 387,560 C387.29,554.4 388.3,534.2 388.6,532 C388.9,529.8 389.76,535.7 390,538 C390.24,540.3 390.8,552.3 391,555 C391.2,557.7 391.7,563.9 392,565 C392.3,566.1 393.6,565 394,566 C394.4,567 395.6,571.05 396,575 C396.4,578.95 397.45,600.66 398,605.5 C398.55,610.34 401,622.95 401.5,623.4 C402,623.85 402.71,613.84 403,610 C403.29,606.16 404.1,591 404.4,585 C404.7,579 405.64,556.2 406,550 C406.36,543.8 407.6,525.3 408,523 C408.4,520.7 409.64,526.3 410,527 C410.36,527.7 411.3,526.2 411.6,530 C411.9,533.8 412.66,557.45 413,565 C413.34,572.55 414.5,600.5 415,605.5 C415.5,610.5 417.34,613.28 418,615 C418.66,616.72 421,624.2 421.6,622.7 C422.2,621.2 423.61,606.27 424,600 C424.39,593.73 425.26,567.35 425.5,560 C425.74,552.65 426.15,527.5 426.4,526.5 C426.65,525.5 427.74,545.65 428,550 C428.26,554.35 428.63,565.9 429,570 C429.37,574.1 431.3,587.45 431.7,591 C432.1,594.55 432.74,602.6 433,605.5 L499.9,534.4 C500.18,541.44 500.84,565.34 501.3,569.6 C501.76,573.86 504,573.16 504.5,577 C505,580.84 505.69,603.65 506.3,608 C506.91,612.35 509.96,620.1 510.6,620.5 C511.24,620.9 512.26,616.05 512.7,612 C513.14,607.95 514.49,585.32 515,580 C515.51,574.68 517.3,559.8 517.8,558.8 C518.3,557.8 519.58,569.18 520,570 C520.42,570.82 521.5,563.45 522,567 C522.5,570.55 524.34,600.15 525,605.5 C525.66,610.85 527.95,622.35 528.6,620.5 C529.25,618.65 530.93,595.46 531.5,587 C532.07,578.54 533.75,538.1 534.3,535.9 C534.85,533.7 536.43,560.59 537,565 C537.57,569.41 539.4,576.5 540,580 C540.6,583.5 542.28,595.73 543,600 C543.72,604.27 546.42,626.03 547.2,622.7 C547.98,619.37 550.22,572.59 550.8,566.7 C551.38,560.81 552.38,563.77 553,563.8 C553.62,563.83 556.3,566.58 557,567 C557.7,567.42 559.4,563.9 560,568 C560.6,572.1 562.5,602.82 563,608 C563.5,613.18 564.36,623.5 565,619.8 C565.64,616.1 568.68,580.04 569.4,571 C570.12,561.96 571.7,533.56 572.2,529.4 C572.7,525.24 573.97,525.96 574.4,529.4 C574.83,532.84 576.14,556.54 576.5,563.8 C576.86,571.06 577.28,596.26 578,602 C578.72,607.74 582.8,622.4 583.7,621.2 C584.6,620 586.43,598.75 587,590 C587.57,581.25 588.87,538.9 589.4,533.7 C589.93,528.5 591.94,534.37 592.3,538 C592.66,541.63 592.43,563 593,570 C593.57,577 597.35,603.6 598,608 C598.65,612.4 598.9,616.8 599.5,614 C600.1,611.2 603.14,587.96 604,580 C604.86,572.04 607.4,535.4 608.1,534.4 C608.8,533.4 610.43,563.04 611,570 C611.57,576.96 612.87,599.02 613.8,604 C614.73,608.98 619.12,624.68 620.3,619.8 C621.48,614.92 624.73,560.38 625.6,555.2 C626.47,550.02 628.24,563.26 629,568 C629.76,572.74 632.2,597.13 633.2,602.6 C634.2,608.07 637.92,630.02 639,622.7 C640.08,615.38 643.19,539.3 644,529.4 C644.81,519.5 646.53,519.84 647.1,523.7 C647.67,527.56 649.15,560.11 649.7,568 C650.25,575.89 651.88,597.42 652.6,602.6 C653.32,607.78 656.06,625.16 656.9,619.8 C657.74,614.44 660.33,557.25 661,549 C661.67,540.75 663,534.5 663.6,537.3 C664.2,540.1 666.38,569.9 667,577 C667.62,584.1 669.23,604.59 669.8,608.3 C670.37,612.01 671.98,616.43 672.7,614.1 C673.42,611.77 676.03,593.4 677,585 C677.97,576.6 681.54,531.64 682.4,530.1 C683.26,528.56 684.85,562.21 685.6,569.6 C686.35,576.99 689.11,598.91 689.9,604 C690.69,609.09 692.57,627.75 693.5,620.5 C694.43,613.25 698.12,536.59 699.2,531.5 C700.28,526.41 703.5,562.35 704.3,569.6 C705.1,576.85 706.42,598.91 707.2,604 C707.98,609.09 711.25,627.75 712.1,620.5 C712.95,613.25 714.98,540.68 715.7,531.5 C716.42,522.32 718.65,525.18 719.3,528.7 C719.95,532.22 721.55,558.74 722.2,566.7 C722.85,574.66 725.08,602.41 725.8,608.3 C726.52,614.19 728.4,634.28 729.4,625.6 C730.4,616.92 734.87,531.06 735.8,521.5 C736.73,511.94 738.13,522.65 738.7,530 C739.27,537.35 740.97,587 741.5,595 C742.03,603 743.36,606.87 744,610 C744.64,613.13 747.15,629.05 747.9,626.3 C748.65,623.55 750.74,588.96 751.5,582.5 C752.26,576.04 754.78,560.85 755.5,561.7 C756.22,562.55 757.95,585.19 758.7,591 C759.45,596.81 762.26,615.92 763,619.8 C763.74,623.68 765.53,629.8 766.1,629.8 C766.67,629.8 767.87,629.48 768.7,619.8 C769.53,610.12 773.54,538.02 774.4,533 C775.26,527.98 776.79,562.35 777.3,569.6 C777.81,576.85 778.78,600.41 779.5,605.5 C780.22,610.59 783.71,624.52 784.5,620.5 C785.29,616.48 786.68,574.41 787.4,565.3 C788.12,556.19 790.84,529.13 791.7,529.4 C792.56,529.67 795.29,560.11 796,568 C796.71,575.89 798.45,603.7 798.8,608.3 C799.15,612.9 798.64,622.18 799.5,614 C800.36,605.82 806.18,535.03 807.4,526.5 C808.62,517.97 810.98,524.39 811.7,528.7 C812.42,533.01 814.02,561.64 814.6,569.6 C815.18,577.56 816.86,602.92 817.5,608.3 C818.14,613.68 820.21,630.86 821,623.4 C821.79,615.94 824.68,542.96 825.4,533.7 C826.12,524.44 827.56,527.93 828.2,530.8 C828.84,533.67 831.22,555.51 831.8,562.4 C832.38,569.29 833.21,595.11 834,599.7 C834.79,604.29 838.91,609.16 839.7,608.3 C840.49,607.44 841.46,594.54 841.9,591.1 L907.9,614.8 C908.62,616.24 910.86,622.93 911.5,622 C912.14,621.07 913.59,615.05 914.3,605.5 C915.01,595.95 917.81,533.68 918.6,526.5 C919.39,519.32 921.62,525.8 922.2,533.7 C922.78,541.6 923.82,597.32 924.4,605.5 C924.98,613.68 927.64,614.5 928,615.5 L928,652.5 Z" fill="rgba(126,178,109,0.8)"/>
<path d="M382,619 C382.15,618.8 383.12,620.1 383.5,617 C383.88,613.9 385.4,593.7 385.75,588 C386.1,582.3 386.71,565.6 387,560 C387.29,554.4 388.3,534.2 388.6,532 C388.9,529.8 389.76,535.7 390,538 C390.24,540.3 390.8,552.3 391,555 C391.2,557.7 391.7,563.9 392,565 C392.3,566.1 393.6,565 394,566 C394.4,567 395.6,571.05 396,575 C396.4,578.95 397.45,600.66 398,605.5 C398.55,610.34 401,622.95 401.5,623.4 C402,623.85 402.71,613.84 403,610 C403.29,606.16 404.1,591 404.4,585 C404.7,579 405.64,556.2 406,550 C406.36,543.8 407.6,525.3 408,523 C408.4,520.7 409.64,526.3 410,527 C410.36,527.7 411.3,526.2 411.6,530 C411.9,533.8 412.66,557.45 413,565 C413.34,572.55 414.5,600.5 415,605.5 C415.5,610.5 417.34,613.28 418,615 C418.66,616.72 421,624.2 421.6,622.7 C422.2,621.2 423.61,606.27 424,600 C424.39,593.73 425.26,567.35 425.5,560 C425.74,552.65 426.15,527.5 426.4,526.5 C426.65,525.5 427.74,545.65 428,550 C428.26,554.35 428.63,565.9 429,570 C429.37,574.1 431.3,587.45 431.7,591 C432.1,594.55 432.74,602.6 433,605.5 L499.9,534.4 C500.18,541.44 500.84,565.34 501.3,569.6 C501.76,573.86 504,573.16 504.5,577 C505,580.84 505.69,603.65 506.3,608 C506.91,612.35 509.96,620.1 510.6,620.5 C511.24,620.9 512.26,616.05 512.7,612 C513.14,607.95 514.49,585.32 515,580 C515.51,574.68 517.3,559.8 517.8,558.8 C518.3,557.8 519.58,569.18 520,570 C520.42,570.82 521.5,563.45 522,567 C522.5,570.55 524.34,600.15 525,605.5 C525.66,610.85 527.95,622.35 528.6,620.5 C529.25,618.65 530.93,595.46 531.5,587 C532.07,578.54 533.75,538.1 534.3,535.9 C534.85,533.7 536.43,560.59 537,565 C537.57,569.41 539.4,576.5 540,580 C540.6,583.5 542.28,595.73 543,600 C543.72,604.27 546.42,626.03 547.2,622.7 C547.98,619.37 550.22,572.59 550.8,566.7 C551.38,560.81 552.38,563.77 553,563.8 C553.62,563.83 556.3,566.58 557,567 C557.7,567.42 559.4,563.9 560,568 C560.6,572.1 562.5,602.82 563,608 C563.5,613.18 564.36,623.5 565,619.8 C565.64,616.1 568.68,580.04 569.4,571 C570.12,561.96 571.7,533.56 572.2,529.4 C572.7,525.24 573.97,525.96 574.4,529.4 C574.83,532.84 576.14,556.54 576.5,563.8 C576.86,571.06 577.28,596.26 578,602 C578.72,607.74 582.8,622.4 583.7,621.2 C584.6,620 586.43,598.75 587,590 C587.57,581.25 588.87,538.9 589.4,533.7 C589.93,528.5 591.94,534.37 592.3,538 C592.66,541.63 592.43,563 593,570 C593.57,577 597.35,603.6 598,608 C598.65,612.4 598.9,616.8 599.5,614 C600.1,611.2 603.14,587.96 604,580 C604.86,572.04 607.4,535.4 608.1,534.4 C608.8,533.4 610.43,563.04 611,570 C611.57,576.96 612.87,599.02 613.8,604 C614.73,608.98 619.12,624.68 620.3,619.8 C621.48,614.92 624.73,560.38 625.6,555.2 C626.47,550.02 628.24,563.26 629,568 C629.76,572.74 632.2,597.13 633.2,602.6 C634.2,608.07 637.92,630.02 639,622.7 C640.08,615.38 643.19,539.3 644,529.4 C644.81,519.5 646.53,519.84 647.1,523.7 C647.67,527.56 649.15,560.11 649.7,568 C650.25,575.89 651.88,597.42 652.6,602.6 C653.32,607.78 656.06,625.16 656.9,619.8 C657.74,614.44 660.33,557.25 661,549 C661.67,540.75 663,534.5 663.6,537.3 C664.2,540.1 666.38,569.9 667,577 C667.62,584.1 669.23,604.59 669.8,608.3 C670.37,612.01 671.98,616.43 672.7,614.1 C673.42,611.77 676.03,593.4 677,585 C677.97,576.6 681.54,531.64 682.4,530.1 C683.26,528.56 684.85,562.21 685.6,569.6 C686.35,576.99 689.11,598.91 689.9,604 C690.69,609.09 692.57,627.75 693.5,620.5 C694.43,613.25 698.12,536.59 699.2,531.5 C700.28,526.41 703.5,562.35 704.3,569.6 C705.1,576.85 706.42,598.91 707.2,604 C707.98,609.09 711.25,627.75 712.1,620.5 C712.95,613.25 714.98,540.68 715.7,531.5 C716.42,522.32 718.65,525.18 719.3,528.7 C719.95,532.22 721.55,558.74 722.2,566.7 C722.85,574.66 725.08,602.41 725.8,608.3 C726.52,614.19 728.4,634.28 729.4,625.6 C730.4,616.92 734.87,531.06 735.8,521.5 C736.73,511.94 738.13,522.65 738.7,530 C739.27,537.35 740.97,587 741.5,595 C742.03,603 743.36,606.87 744,610 C744.64,613.13 747.15,629.05 747.9,626.3 C748.65,623.55 750.74,588.96 751.5,582.5 C752.26,576.04 754.78,560.85 755.5,561.7 C756.22,562.55 757.95,585.19 758.7,591 C759.45,596.81 762.26,615.92 763,619.8 C763.74,623.68 765.53,629.8 766.1,629.8 C766.67,629.8 767.87,629.48 768.7,619.8 C769.53,610.12 773.54,538.02 774.4,533 C775.26,527.98 776.79,562.35 777.3,569.6 C777.81,576.85 778.78,600.41 779.5,605.5 C780.22,610.59 783.71,624.52 784.5,620.5 C785.29,616.48 786.68,574.41 787.4,565.3 C788.12,556.19 790.84,529.13 791.7,529.4 C792.56,529.67 795.29,560.11 796,568 C796.71,575.89 798.45,603.7 798.8,608.3 C799.15,612.9 798.64,622.18 799.5,614 C800.36,605.82 806.18,535.03 807.4,526.5 C808.62,517.97 810.98,524.39 811.7,528.7 C812.42,533.01 814.02,561.64 814.6,569.6 C815.18,577.56 816.86,602.92 817.5,608.3 C818.14,613.68 820.21,630.86 821,623.4 C821.79,615.94 824.68,542.96 825.4,533.7 C826.12,524.44 827.56,527.93 828.2,530.8 C828.84,533.67 831.22,555.51 831.8,562.4 C832.38,569.29 833.21,595.11 834,599.7 C834.79,604.29 838.91,609.16 839.7,608.3 C840.49,607.44 841.46,594.54 841.9,591.1 L907.9,614.8 C908.62,616.24 910.86,622.93 911.5,622 C912.14,621.07 913.59,615.05 914.3,605.5 C915.01,595.95 917.81,533.68 918.6,526.5 C919.39,519.32 921.62,525.8 922.2,533.7 C922.78,541.6 923.82,597.32 924.4,605.5 C924.98,613.68 927.64,614.5 928,615.5" stroke="#7eb26d" stroke-width="3.0" fill="none" stroke-linejoin="round" stroke-linecap="round"/>
<text x="346.7" y="517.8" font-size="11.5" font-weight="400" fill="#c8c9ca" stroke="#c8c9ca" stroke-width="0.3" textLength="30" lengthAdjust="spacingAndGlyphs">15.0 V</text>
<text x="346.7" y="563.8" font-size="11.5" font-weight="400" fill="#c8c9ca" stroke="#c8c9ca" stroke-width="0.3" textLength="30" lengthAdjust="spacingAndGlyphs">14.0 V</text>
<text x="346.7" y="609.8" font-size="11.5" font-weight="400" fill="#c8c9ca" stroke="#c8c9ca" stroke-width="0.3" textLength="30" lengthAdjust="spacingAndGlyphs">13.0 V</text>
<text x="346.7" y="655.8" font-size="11.5" font-weight="400" fill="#c8c9ca" stroke="#c8c9ca" stroke-width="0.3" textLength="30" lengthAdjust="spacingAndGlyphs">12.0 V</text>
<text x="427.5" y="670" font-size="11.5" font-weight="400" fill="#c8c9ca" stroke="#c8c9ca" stroke-width="0.3" textLength="16" lengthAdjust="spacingAndGlyphs">7/6</text>
<text x="481.5" y="670" font-size="11.5" font-weight="400" fill="#c8c9ca" stroke="#c8c9ca" stroke-width="0.3" textLength="16" lengthAdjust="spacingAndGlyphs">7/9</text>
<text x="534" y="670" font-size="11.5" font-weight="400" fill="#c8c9ca" stroke="#c8c9ca" stroke-width="0.3" textLength="21" lengthAdjust="spacingAndGlyphs">7/12</text>
<text x="589" y="670" font-size="11.5" font-weight="400" fill="#c8c9ca" stroke="#c8c9ca" stroke-width="0.3" textLength="21" lengthAdjust="spacingAndGlyphs">7/15</text>
<text x="643" y="670" font-size="11.5" font-weight="400" fill="#c8c9ca" stroke="#c8c9ca" stroke-width="0.3" textLength="21" lengthAdjust="spacingAndGlyphs">7/18</text>
<text x="698" y="670" font-size="11.5" font-weight="400" fill="#c8c9ca" stroke="#c8c9ca" stroke-width="0.3" textLength="21" lengthAdjust="spacingAndGlyphs">7/21</text>
<text x="753" y="670" font-size="11.5" font-weight="400" fill="#c8c9ca" stroke="#c8c9ca" stroke-width="0.3" textLength="21" lengthAdjust="spacingAndGlyphs">7/24</text>
<text x="807" y="670" font-size="11.5" font-weight="400" fill="#c8c9ca" stroke="#c8c9ca" stroke-width="0.3" textLength="21" lengthAdjust="spacingAndGlyphs">7/27</text>
<text x="862" y="670" font-size="11.5" font-weight="400" fill="#c8c9ca" stroke="#c8c9ca" stroke-width="0.3" textLength="21" lengthAdjust="spacingAndGlyphs">7/30</text>
<text x="919.5" y="670" font-size="11.5" font-weight="400" fill="#c8c9ca" stroke="#c8c9ca" stroke-width="0.3" textLength="16" lengthAdjust="spacingAndGlyphs">8/2</text><rect x="356.2" y="688.3" width="11.6" height="4" rx="2" fill="#7eb26d"/><text x="371.8" y="693" font-size="11.5" font-weight="400" fill="#d8d9da" stroke="#d8d9da" stroke-width="0.3" textLength="317.5" lengthAdjust="spacingAndGlyphs">Battery-voltage.last  Min: 12.50 V  Max: 14.83 V  Current: 12.80 V</text></svg></div>
<div class="panel" style="left:961px;top:477px;width:616px;height:228px"><svg width="616" height="228" viewBox="962 478 616 228"><text x="1136.2" y="497" font-size="13" font-weight="400" fill="#d8d9da" stroke="#d8d9da" stroke-width="0.55" textLength="266" lengthAdjust="spacingAndGlyphs">Aktueller Verbrauch (IP-CAMs &amp; Licht in Watt)</text><path d="M1003,514.5 H1554 M1003,560.5 H1554 M1003,606.5 H1554 M1003,652.5 H1554" stroke="rgba(255,255,255,0.17)" stroke-width="1" fill="none"/>
<path d="M1057.5,514 V653 M1112.5,514 V653 M1167.5,514 V653 M1222.5,514 V653 M1277.5,514 V653 M1332.5,514 V653 M1388.5,514 V653 M1443.5,514 V653 M1498.5,514 V653 M1553.5,514 V653" stroke="rgba(255,255,255,0.17)" stroke-width="1" fill="none"/>
<path d="M1002.9,652.5 L1002.9,539.4 L1004.3,541 L1005.8,602.6 L1008.6,604 L1010,591 L1012.2,604 L1015,598 L1018,541 L1023,543 L1024.4,599.7 L1029.4,597 L1033.7,598 L1035.9,608 L1038,541 L1039.5,539.4 L1042.4,596.8 L1047.4,594 L1049.5,602.6 L1052.4,592.5 L1055.3,606.9 L1123.4,601.2 L1124.9,597 L1127,541 L1130.6,536.6 L1132.8,539.4 L1135,605.5 L1138.5,594 L1141.4,602.6 L1145.7,599.7 L1147,543.7 L1149.2,542.3 L1152,543.7 L1153.6,596.8 L1158.6,598.3 L1162.2,602.6 L1165,591 L1168,531.5 L1170.8,543.7 L1172.3,604 L1175.8,597 L1180,599.7 L1183,535 L1185,535 L1188.6,542.3 L1190,601 L1195.8,597 L1200,602.6 L1202.2,539.4 L1206.5,543.7 L1208,608.3 L1211.6,597 L1217.3,602.6 L1220.2,543.7 L1222.8,530.1 L1232.4,598.3 L1236.7,604 L1239.1,537.3 L1243.9,541.6 L1245.3,605.5 L1250.3,597 L1256,602.6 L1258.6,537.3 L1262.5,543.7 L1264.7,611.2 L1268.3,598.3 L1273.3,604 L1275.4,538 L1279,533.7 L1281.2,546.6 L1282.6,604 L1286.9,595.4 L1293.4,605.5 L1294.8,541.6 L1297,543.7 L1302,596.8 L1309.2,599.7 L1312.7,609 L1313.5,543.7 L1317,540.9 L1318.5,605.5 L1323.5,599.7 L1327.1,589.7 L1329.3,605.5 L1333.6,540.2 L1337.1,543.7 L1338.6,602.6 L1342.2,597 L1347.9,604 L1349.3,536.6 L1354.4,540.2 L1355.8,605.5 L1360.8,595.4 L1365.1,604 L1368,535 L1370,534.4 L1373.6,539.4 L1375,602.6 L1379.3,602.6 L1382.2,604 L1385.8,538.7 L1391.5,541.6 L1393,606.9 L1399.4,598.3 L1402.3,606.9 L1404.5,540.9 L1410.2,539.4 L1411.6,604 L1415.9,594 L1421,605.5 L1423.8,537.3 L1434.6,599 L1439.6,602.6 L1441,608.3 L1444.6,537.3 L1447.5,542.3 L1449,605.5 L1453.2,599 L1456.8,604 L1459,624 L1465.5,625.6 L1466.9,624.1 L1534.3,540.9 L1537.2,541.6 L1538.6,548 L1540,604 L1544.4,595.4 L1548.7,604 L1550.8,545.2 L1554.4,538.7 L1554.4,652.5 Z" fill="rgba(126,178,109,0.8)"/>
<path d="M1002.9,539.4 L1004.3,541 L1005.8,602.6 L1008.6,604 L1010,591 L1012.2,604 L1015,598 L1018,541 L1023,543 L1024.4,599.7 L1029.4,597 L1033.7,598 L1035.9,608 L1038,541 L1039.5,539.4 L1042.4,596.8 L1047.4,594 L1049.5,602.6 L1052.4,592.5 L1055.3,606.9 L1123.4,601.2 L1124.9,597 L1127,541 L1130.6,536.6 L1132.8,539.4 L1135,605.5 L1138.5,594 L1141.4,602.6 L1145.7,599.7 L1147,543.7 L1149.2,542.3 L1152,543.7 L1153.6,596.8 L1158.6,598.3 L1162.2,602.6 L1165,591 L1168,531.5 L1170.8,543.7 L1172.3,604 L1175.8,597 L1180,599.7 L1183,535 L1185,535 L1188.6,542.3 L1190,601 L1195.8,597 L1200,602.6 L1202.2,539.4 L1206.5,543.7 L1208,608.3 L1211.6,597 L1217.3,602.6 L1220.2,543.7 L1222.8,530.1 L1232.4,598.3 L1236.7,604 L1239.1,537.3 L1243.9,541.6 L1245.3,605.5 L1250.3,597 L1256,602.6 L1258.6,537.3 L1262.5,543.7 L1264.7,611.2 L1268.3,598.3 L1273.3,604 L1275.4,538 L1279,533.7 L1281.2,546.6 L1282.6,604 L1286.9,595.4 L1293.4,605.5 L1294.8,541.6 L1297,543.7 L1302,596.8 L1309.2,599.7 L1312.7,609 L1313.5,543.7 L1317,540.9 L1318.5,605.5 L1323.5,599.7 L1327.1,589.7 L1329.3,605.5 L1333.6,540.2 L1337.1,543.7 L1338.6,602.6 L1342.2,597 L1347.9,604 L1349.3,536.6 L1354.4,540.2 L1355.8,605.5 L1360.8,595.4 L1365.1,604 L1368,535 L1370,534.4 L1373.6,539.4 L1375,602.6 L1379.3,602.6 L1382.2,604 L1385.8,538.7 L1391.5,541.6 L1393,606.9 L1399.4,598.3 L1402.3,606.9 L1404.5,540.9 L1410.2,539.4 L1411.6,604 L1415.9,594 L1421,605.5 L1423.8,537.3 L1434.6,599 L1439.6,602.6 L1441,608.3 L1444.6,537.3 L1447.5,542.3 L1449,605.5 L1453.2,599 L1456.8,604 L1459,624 L1465.5,625.6 L1466.9,624.1 L1534.3,540.9 L1537.2,541.6 L1538.6,548 L1540,604 L1544.4,595.4 L1548.7,604 L1550.8,545.2 L1554.4,538.7" stroke="#7eb26d" stroke-width="2.9" fill="none" stroke-linejoin="round" stroke-linecap="round"/>
<text x="974.2" y="517.8" font-size="11.5" font-weight="400" fill="#c8c9ca" stroke="#c8c9ca" stroke-width="0.3" textLength="23" lengthAdjust="spacingAndGlyphs">15 W</text>
<text x="974.2" y="563.8" font-size="11.5" font-weight="400" fill="#c8c9ca" stroke="#c8c9ca" stroke-width="0.3" textLength="23" lengthAdjust="spacingAndGlyphs">10 W</text>
<text x="980.2" y="609.8" font-size="11.5" font-weight="400" fill="#c8c9ca" stroke="#c8c9ca" stroke-width="0.3" textLength="17" lengthAdjust="spacingAndGlyphs">5 W</text>
<text x="980.2" y="655.8" font-size="11.5" font-weight="400" fill="#c8c9ca" stroke="#c8c9ca" stroke-width="0.3" textLength="17" lengthAdjust="spacingAndGlyphs">0 W</text>
<text x="1049.5" y="670" font-size="11.5" font-weight="400" fill="#c8c9ca" stroke="#c8c9ca" stroke-width="0.3" textLength="16" lengthAdjust="spacingAndGlyphs">7/6</text>
<text x="1104.5" y="670" font-size="11.5" font-weight="400" fill="#c8c9ca" stroke="#c8c9ca" stroke-width="0.3" textLength="16" lengthAdjust="spacingAndGlyphs">7/9</text>
<text x="1157" y="670" font-size="11.5" font-weight="400" fill="#c8c9ca" stroke="#c8c9ca" stroke-width="0.3" textLength="21" lengthAdjust="spacingAndGlyphs">7/12</text>
<text x="1212" y="670" font-size="11.5" font-weight="400" fill="#c8c9ca" stroke="#c8c9ca" stroke-width="0.3" textLength="21" lengthAdjust="spacingAndGlyphs">7/15</text>
<text x="1267" y="670" font-size="11.5" font-weight="400" fill="#c8c9ca" stroke="#c8c9ca" stroke-width="0.3" textLength="21" lengthAdjust="spacingAndGlyphs">7/18</text>
<text x="1322" y="670" font-size="11.5" font-weight="400" fill="#c8c9ca" stroke="#c8c9ca" stroke-width="0.3" textLength="21" lengthAdjust="spacingAndGlyphs">7/21</text>
<text x="1378" y="670" font-size="11.5" font-weight="400" fill="#c8c9ca" stroke="#c8c9ca" stroke-width="0.3" textLength="21" lengthAdjust="spacingAndGlyphs">7/24</text>
<text x="1433" y="670" font-size="11.5" font-weight="400" fill="#c8c9ca" stroke="#c8c9ca" stroke-width="0.3" textLength="21" lengthAdjust="spacingAndGlyphs">7/27</text>
<text x="1488" y="670" font-size="11.5" font-weight="400" fill="#c8c9ca" stroke="#c8c9ca" stroke-width="0.3" textLength="21" lengthAdjust="spacingAndGlyphs">7/30</text>
<text x="1545.5" y="670" font-size="11.5" font-weight="400" fill="#c8c9ca" stroke="#c8c9ca" stroke-width="0.3" textLength="16" lengthAdjust="spacingAndGlyphs">8/2</text><rect x="982.8" y="688.3" width="11.8" height="4" rx="2" fill="#7eb26d"/><text x="998.8" y="693" font-size="11.5" font-weight="400" fill="#d8d9da" stroke="#d8d9da" stroke-width="0.3" textLength="305" lengthAdjust="spacingAndGlyphs">Load-power.last  Min: 3 W  Max: 13 W  Avg: 7 W  Current: 12 W</text></svg></div>
<div class="panel" style="left:1588px;top:477px;width:302px;height:228px;border-radius:0"><div style="position:absolute;left:0;top:0;width:302px;height:27px;background:#343434"></div><svg width="302" height="228" viewBox="1589 478 302 228"><path d="M1659,504.5 h8" /><text x="1653.3" y="497" font-size="13" font-weight="400" fill="#ececec" stroke="#ececec" stroke-width="0.55" textLength="172.3" lengthAdjust="spacingAndGlyphs">Aktueller Verbrauch (Ampere)</text><path d="M1835,489.6 L1843.3,489.6 L1839.15,494 Z" fill="#8e8e8e"/><path d="M1593.8,695.6 L1593.8,585.6 L1597.3,625.6 L1601.6,562.2 L1605.6,625.6 L1608,600 L1611.1,576.7 L1614.4,623.3 L1618.2,625.6 L1646.7,617.8 L1652,610 L1659.6,567.8 L1663,625 L1669.3,573.3 L1673,625 L1676.5,628 L1679.7,572 L1681.1,583 L1682.1,572 L1685.5,628 L1686.2,629 L1689.4,572 L1690.8,583 L1691.8,572 L1695.2,628 L1695.9,629 L1699.1,572 L1700.5,583 L1701.5,572 L1704.9,628 L1705.6,629 L1708.8,572 L1710.2,583 L1711.2,572 L1714.6,628 L1715.3,629 L1718.5,572 L1719.9,583 L1720.9,572 L1724.3,628 L1725,629 L1728.2,572 L1729.6,583 L1730.6,572 L1734,628 L1734.7,629 L1737.9,572 L1739.3,583 L1740.3,572 L1743.7,628 L1744.4,629 L1747.6,572 L1749,583 L1750,572 L1753.4,628 L1754.1,629 L1757.3,572 L1758.7,583 L1759.7,572 L1763.1,628 L1763.8,629 L1767,572 L1768.4,583 L1769.4,572 L1772.8,628 L1773.5,629 L1776.7,572 L1778.1,583 L1779.1,572 L1782.5,628 L1783.2,629 L1786.4,572 L1787.8,583 L1788.8,572 L1792.2,628 L1792.9,629 L1796.1,572 L1797.5,583 L1798.5,572 L1801.9,628 L1802.6,629 L1800,600 L1805.6,565.6 L1810,625 L1815.6,558.9 L1820,625 L1825.6,566.7 L1830,625 L1835.6,654.4 L1840,654.4 L1874.4,533.3 L1878.9,625.6 L1881.5,627.5 L1883.8,558.9 L1884.5,600 L1884.5,695.6 Z" fill="rgba(31,118,189,0.18)"/><path d="M1593.8,585.6 L1597.3,625.6 L1601.6,562.2 L1605.6,625.6 L1608,600 L1611.1,576.7 L1614.4,623.3 L1618.2,625.6 L1646.7,617.8 L1652,610 L1659.6,567.8 L1663,625 L1669.3,573.3 L1673,625 L1676.5,628 L1679.7,572 L1681.1,583 L1682.1,572 L1685.5,628 L1686.2,629 L1689.4,572 L1690.8,583 L1691.8,572 L1695.2,628 L1695.9,629 L1699.1,572 L1700.5,583 L1701.5,572 L1704.9,628 L1705.6,629 L1708.8,572 L1710.2,583 L1711.2,572 L1714.6,628 L1715.3,629 L1718.5,572 L1719.9,583 L1720.9,572 L1724.3,628 L1725,629 L1728.2,572 L1729.6,583 L1730.6,572 L1734,628 L1734.7,629 L1737.9,572 L1739.3,583 L1740.3,572 L1743.7,628 L1744.4,629 L1747.6,572 L1749,583 L1750,572 L1753.4,628 L1754.1,629 L1757.3,572 L1758.7,583 L1759.7,572 L1763.1,628 L1763.8,629 L1767,572 L1768.4,583 L1769.4,572 L1772.8,628 L1773.5,629 L1776.7,572 L1778.1,583 L1779.1,572 L1782.5,628 L1783.2,629 L1786.4,572 L1787.8,583 L1788.8,572 L1792.2,628 L1792.9,629 L1796.1,572 L1797.5,583 L1798.5,572 L1801.9,628 L1802.6,629 L1800,600 L1805.6,565.6 L1810,625 L1815.6,558.9 L1820,625 L1825.6,566.7 L1830,625 L1835.6,654.4 L1840,654.4 L1874.4,533.3 L1878.9,625.6 L1881.5,627.5 L1883.8,558.9 L1884.5,600" stroke="rgb(31,120,193)" stroke-width="1" fill="none"/><path d="M1656.38,673.14 A88.7,88.7 0 1 1 1824.62,673.14 L1797.68,664.13 A60.3,60.3 0 1 0 1683.32,664.13 Z" fill="#262628"/>
<path d="M1656.38,673.14 A88.7,88.7 0 0 1 1655.33,620.22 L1682.6,628.16 A60.3,60.3 0 0 0 1683.32,664.13 Z" fill="#508642"/>
<path d="M1649.94,675.3 A95.5,95.5 0 1 1 1831.06,675.3 L1825.85,673.56 A90,90 0 1 0 1655.15,673.56 Z" fill="#508642"/>
<g transform="translate(1642.35,677.84) rotate(-108.5)"><text x="-4.5" y="5" font-size="14" font-weight="400" fill="#d8d9da" stroke="#d8d9da" stroke-width="0.2" textLength="9" lengthAdjust="spacingAndGlyphs">0</text></g>
<g transform="translate(1838.65,677.84) rotate(108.5)"><text x="-4.5" y="5" font-size="14" font-weight="400" fill="#d8d9da" stroke="#d8d9da" stroke-width="0.2" textLength="9" lengthAdjust="spacingAndGlyphs">5</text></g><text x="1688.9" y="664.9" font-size="36" font-weight="700" fill="#d8d9da" stroke="#d8d9da" stroke-width="0.6" textLength="102.2" lengthAdjust="spacingAndGlyphs">0.80 A</text></svg></div>
<div class="panel" style="left:20px;top:717px;width:302px;height:228px"><svg width="302" height="228" viewBox="21 718 302 228"><text x="85.7" y="737.1" font-size="13" font-weight="400" fill="#d8d9da" stroke="#d8d9da" stroke-width="0.55" textLength="172" lengthAdjust="spacingAndGlyphs">Batterie-Temperatur (Celsius)</text><path d="M72,754.5 H300.6 M72,788.5 H300.6 M72,823.5 H300.6 M72,858.5 H300.6 M72,892.5 H300.6" stroke="rgba(255,255,255,0.17)" stroke-width="1" fill="none"/>
<path d="M109.5,754 V893 M170.5,754 V893 M231.5,754 V893 M292.5,754 V893" stroke="rgba(255,255,255,0.17)" stroke-width="1" fill="none"/>
<path d="M71.7,892.5 L71.7,846.7 C71.9,847.14 72.76,852.81 73.2,850 C73.64,847.19 74.36,828.27 75,825.6 C75.64,822.93 77.25,825.85 78,830 C78.75,834.15 79.67,860.26 80.6,856.7 C81.53,853.14 83.83,804.19 85,803.3 C86.17,802.41 88.51,846.73 89.4,850 C90.29,853.27 90.95,828.69 91.7,827.8 C92.45,826.91 94.12,839.17 95,843.3 L122.8,788.9 C122.8,782.98 122.36,764.18 122.8,766.7 C123.24,769.22 125.06,807.8 126.1,807.8 C127.14,807.8 129.56,762.99 130.6,766.7 C131.64,770.41 132.87,835.16 133.9,835.6 C134.93,836.04 137.26,772.83 138.3,770 C139.34,767.17 140.66,812.48 141.7,814.4 C142.74,816.32 145.07,781.57 146.1,784.4 C147.13,787.23 148.36,833.67 149.4,835.6 C150.44,837.53 152.86,797.57 153.9,798.9 C154.94,800.23 156.31,845.16 157.2,845.6 C158.09,846.04 159.77,806.05 160.6,802.2 C161.43,798.35 162.37,820.85 163.4,816.7 C164.43,812.55 167.05,770.81 168.3,771.1 C169.55,771.39 171.76,816.23 172.8,818.9 C173.84,821.57 175.06,789.91 176.1,791.1 C177.14,792.29 179.56,826.61 180.6,827.8 C181.64,828.99 183.02,797.48 183.9,800 C184.78,802.52 186.16,846.85 187.2,846.7 C188.24,846.55 190.66,800.09 191.7,798.9 C192.74,797.71 194.12,834.99 195,837.8 C195.88,840.61 197.26,817.93 198.3,820 C199.34,822.07 201.61,855.53 202.8,853.3 C203.99,851.07 206.16,802.7 207.2,803.3 C208.24,803.9 209.71,856.61 210.6,857.8 C211.49,858.99 212.87,813.24 213.9,812.2 C214.93,811.16 217.26,847.92 218.3,850 C219.34,852.08 220.81,828.09 221.7,827.8 C222.59,827.51 224.12,846.97 225,847.8 C225.88,848.63 227.26,835.33 228.3,834 C229.34,832.67 231.61,841.59 232.8,837.8 C233.99,834.01 236.01,804.27 237.2,805.6 C238.39,806.93 240.66,848.55 241.7,847.8 C242.74,847.05 244.12,800.6 245,800 C245.88,799.4 247.26,839.15 248.3,843.3 C249.34,847.45 251.76,829.91 252.8,831.1 C253.84,832.29 255.22,853.53 256.1,852.2 C256.98,850.87 258.36,822.58 259.4,821.1 C260.44,819.62 262.7,835.77 263.9,841.1 L292.8,831.1 C293.39,832.67 294.27,838.63 295,837 C295.73,835.37 297.55,819.25 298.3,818.9 C299.05,818.55 300.29,832.33 300.6,834.4 L300.6,892.5 Z" fill="rgba(126,178,109,0.8)"/>
<path d="M71.7,846.7 C71.9,847.14 72.76,852.81 73.2,850 C73.64,847.19 74.36,828.27 75,825.6 C75.64,822.93 77.25,825.85 78,830 C78.75,834.15 79.67,860.26 80.6,856.7 C81.53,853.14 83.83,804.19 85,803.3 C86.17,802.41 88.51,846.73 89.4,850 C90.29,853.27 90.95,828.69 91.7,827.8 C92.45,826.91 94.12,839.17 95,843.3 L122.8,788.9 C122.8,782.98 122.36,764.18 122.8,766.7 C123.24,769.22 125.06,807.8 126.1,807.8 C127.14,807.8 129.56,762.99 130.6,766.7 C131.64,770.41 132.87,835.16 133.9,835.6 C134.93,836.04 137.26,772.83 138.3,770 C139.34,767.17 140.66,812.48 141.7,814.4 C142.74,816.32 145.07,781.57 146.1,784.4 C147.13,787.23 148.36,833.67 149.4,835.6 C150.44,837.53 152.86,797.57 153.9,798.9 C154.94,800.23 156.31,845.16 157.2,845.6 C158.09,846.04 159.77,806.05 160.6,802.2 C161.43,798.35 162.37,820.85 163.4,816.7 C164.43,812.55 167.05,770.81 168.3,771.1 C169.55,771.39 171.76,816.23 172.8,818.9 C173.84,821.57 175.06,789.91 176.1,791.1 C177.14,792.29 179.56,826.61 180.6,827.8 C181.64,828.99 183.02,797.48 183.9,800 C184.78,802.52 186.16,846.85 187.2,846.7 C188.24,846.55 190.66,800.09 191.7,798.9 C192.74,797.71 194.12,834.99 195,837.8 C195.88,840.61 197.26,817.93 198.3,820 C199.34,822.07 201.61,855.53 202.8,853.3 C203.99,851.07 206.16,802.7 207.2,803.3 C208.24,803.9 209.71,856.61 210.6,857.8 C211.49,858.99 212.87,813.24 213.9,812.2 C214.93,811.16 217.26,847.92 218.3,850 C219.34,852.08 220.81,828.09 221.7,827.8 C222.59,827.51 224.12,846.97 225,847.8 C225.88,848.63 227.26,835.33 228.3,834 C229.34,832.67 231.61,841.59 232.8,837.8 C233.99,834.01 236.01,804.27 237.2,805.6 C238.39,806.93 240.66,848.55 241.7,847.8 C242.74,847.05 244.12,800.6 245,800 C245.88,799.4 247.26,839.15 248.3,843.3 C249.34,847.45 251.76,829.91 252.8,831.1 C253.84,832.29 255.22,853.53 256.1,852.2 C256.98,850.87 258.36,822.58 259.4,821.1 C260.44,819.62 262.7,835.77 263.9,841.1 L292.8,831.1 C293.39,832.67 294.27,838.63 295,837 C295.73,835.37 297.55,819.25 298.3,818.9 C299.05,818.55 300.29,832.33 300.6,834.4" stroke="#7eb26d" stroke-width="3.0" fill="none" stroke-linejoin="round" stroke-linecap="round"/>
<text x="32.3" y="757.8" font-size="11.5" font-weight="400" fill="#c8c9ca" stroke="#c8c9ca" stroke-width="0.3" textLength="34.3" lengthAdjust="spacingAndGlyphs">30.0 °C</text>
<text x="32.3" y="791.8" font-size="11.5" font-weight="400" fill="#c8c9ca" stroke="#c8c9ca" stroke-width="0.3" textLength="34.3" lengthAdjust="spacingAndGlyphs">25.0 °C</text>
<text x="32.3" y="826.8" font-size="11.5" font-weight="400" fill="#c8c9ca" stroke="#c8c9ca" stroke-width="0.3" textLength="34.3" lengthAdjust="spacingAndGlyphs">20.0 °C</text>
<text x="32.3" y="861.8" font-size="11.5" font-weight="400" fill="#c8c9ca" stroke="#c8c9ca" stroke-width="0.3" textLength="34.3" lengthAdjust="spacingAndGlyphs">15.0 °C</text>
<text x="32.3" y="895.8" font-size="11.5" font-weight="400" fill="#c8c9ca" stroke="#c8c9ca" stroke-width="0.3" textLength="34.3" lengthAdjust="spacingAndGlyphs">10.0 °C</text>
<text x="101.5" y="910" font-size="11.5" font-weight="400" fill="#c8c9ca" stroke="#c8c9ca" stroke-width="0.3" textLength="16" lengthAdjust="spacingAndGlyphs">7/8</text>
<text x="160" y="910" font-size="11.5" font-weight="400" fill="#c8c9ca" stroke="#c8c9ca" stroke-width="0.3" textLength="21" lengthAdjust="spacingAndGlyphs">7/16</text>
<text x="221" y="910" font-size="11.5" font-weight="400" fill="#c8c9ca" stroke="#c8c9ca" stroke-width="0.3" textLength="21" lengthAdjust="spacingAndGlyphs">7/24</text>
<text x="284.5" y="910" font-size="11.5" font-weight="400" fill="#c8c9ca" stroke="#c8c9ca" stroke-width="0.3" textLength="16" lengthAdjust="spacingAndGlyphs">8/1</text><rect x="42.1" y="928.3" width="11.8" height="4" rx="2" fill="#7eb26d"/><text x="58.3" y="933.1" font-size="11.5" font-weight="400" fill="#d8d9da" stroke="#d8d9da" stroke-width="0.3" textLength="192.3" lengthAdjust="spacingAndGlyphs">Battery-temperature.last  Current: 18 °C</text></svg></div>
<div class="panel" style="left:334px;top:717px;width:302px;height:228px"><svg width="302" height="228" viewBox="335 718 302 228"><text x="410.35" y="737.1" font-size="13" font-weight="400" fill="#d8d9da" stroke="#d8d9da" stroke-width="0.55" textLength="150.7" lengthAdjust="spacingAndGlyphs">Batterie-Ladung (Ampere)</text><path d="M402.38,913.14 A88.7,88.7 0 1 1 570.62,913.14 L543.68,904.13 A60.3,60.3 0 1 0 429.32,904.13 Z" fill="#262628"/>
<path d="M402.38,913.14 A88.7,88.7 0 0 1 402.07,912.19 L429.1,903.48 A60.3,60.3 0 0 0 429.32,904.13 Z" fill="#508642"/>
<path d="M395.94,915.3 A95.5,95.5 0 1 1 577.06,915.3 L571.85,913.56 A90,90 0 1 0 401.15,913.56 Z" fill="#508642"/>
<g transform="translate(388.35,917.84) rotate(-108.5)"><text x="-4.5" y="5" font-size="14" font-weight="400" fill="#d8d9da" stroke="#d8d9da" stroke-width="0.2" textLength="9" lengthAdjust="spacingAndGlyphs">0</text></g>
<g transform="translate(584.65,917.84) rotate(108.5)"><text x="-8" y="5" font-size="14" font-weight="400" fill="#d8d9da" stroke="#d8d9da" stroke-width="0.2" textLength="16" lengthAdjust="spacingAndGlyphs">10</text></g><text x="434.4" y="904.9" font-size="36" font-weight="700" fill="#d8d9da" stroke="#d8d9da" stroke-width="0.6" textLength="103.4" lengthAdjust="spacingAndGlyphs">0.03 A</text></svg></div>
<div class="panel" style="left:647px;top:717px;width:302px;height:228px"><svg width="302" height="228" viewBox="648 718 302 228"><text x="710" y="737.1" font-size="13" font-weight="400" fill="#d8d9da" stroke="#d8d9da" stroke-width="0.55" textLength="177" lengthAdjust="spacingAndGlyphs">Solar Produktion gesamt (Tag)</text><text x="702.3" y="857.3" font-size="46.3" font-weight="700" fill="#d8d9da" stroke="#d8d9da" stroke-width="1.1" textLength="193.9" lengthAdjust="spacingAndGlyphs">60.31 MW</text><path d="M652.9,935.6 L652.9,935.6 L655.6,867.8 L658.2,935.6 L676.7,935.6 L679.6,855.6 L714.4,935.6 L868.9,935.6 L872.2,864.4 L874.9,935.6 L898.9,935.6 L933.3,773.3 L935.6,935.6 L937.8,854.4 L940.4,935.6 L942.7,780 L943.5,935.6 L943.5,935.6 Z" fill="rgba(31,118,189,0.18)"/><path d="M652.9,935.6 L655.6,867.8 L658.2,935.6 L676.7,935.6 L679.6,855.6 L714.4,935.6 L868.9,935.6 L872.2,864.4 L874.9,935.6 L898.9,935.6 L933.3,773.3 L935.6,935.6 L937.8,854.4 L940.4,935.6 L942.7,780 L943.5,935.6" stroke="rgb(31,120,193)" stroke-width="1" fill="none"/></svg></div>
<div class="panel" style="left:961px;top:717px;width:302px;height:228px"><svg width="302" height="228" viewBox="962 718 302 228"><text x="1042.75" y="737.1" font-size="13" font-weight="400" fill="#d8d9da" stroke="#d8d9da" stroke-width="0.55" textLength="139.5" lengthAdjust="spacingAndGlyphs">Verbrauch gesamt (Tag)</text><text x="1024.8" y="857.3" font-size="46.3" font-weight="700" fill="#d8d9da" stroke="#d8d9da" stroke-width="1.1" textLength="177.5" lengthAdjust="spacingAndGlyphs">12.82 kW</text><path d="M967.2,935.6 L967.2,935.6 L969.4,805.6 L972.3,935.6 L1183.4,935.6 L1186.6,848.9 L1188.3,935.6 L1249.4,935.6 L1252.1,773.3 L1255,935.6 L1256.6,935.6 L1256.6,935.6 Z" fill="rgba(31,118,189,0.18)"/><path d="M967.2,935.6 L969.4,805.6 L972.3,935.6 L1183.4,935.6 L1186.6,848.9 L1188.3,935.6 L1249.4,935.6 L1252.1,773.3 L1255,935.6 L1256.6,935.6" stroke="rgb(31,120,193)" stroke-width="1" fill="none"/></svg></div>
<div class="panel" style="left:1275px;top:717px;width:302px;height:228px"><svg width="302" height="228" viewBox="1276 718 302 228"><text x="1354.4" y="737.1" font-size="13" font-weight="400" fill="#d8d9da" stroke="#d8d9da" stroke-width="0.55" textLength="144" lengthAdjust="spacingAndGlyphs">Batterie-Spannung (Volt)</text><path d="M1343.08,913.14 A88.7,88.7 0 1 1 1511.32,913.14 L1484.38,904.13 A60.3,60.3 0 1 0 1370.02,904.13 Z" fill="#262628"/>
<path d="M1343.08,913.14 A88.7,88.7 0 0 1 1382.34,808.48 L1396.7,832.98 A60.3,60.3 0 0 0 1370.02,904.13 Z" fill="#508642"/>
<path d="M1336.64,915.3 A95.5,95.5 0 0 1 1335.5,858.32 L1340.78,859.86 A90,90 0 0 0 1341.85,913.56 Z" fill="#bf1b00"/>
<path d="M1335.5,858.32 A95.5,95.5 0 0 1 1522.55,879.67 L1517.06,879.98 A90,90 0 0 0 1340.78,859.86 Z" fill="#508642"/>
<path d="M1522.55,879.67 A95.5,95.5 0 0 1 1517.76,915.3 L1512.55,913.56 A90,90 0 0 0 1517.06,879.98 Z" fill="#bf1b00"/>
<g transform="translate(1329.05,917.84) rotate(-108.5)"><text x="-6.75" y="5" font-size="14" font-weight="400" fill="#d8d9da" stroke="#d8d9da" stroke-width="0.2" textLength="13.5" lengthAdjust="spacingAndGlyphs">11</text></g>
<g transform="translate(1327.82,856.09) rotate(-73.78)"><text x="-13.3" y="5" font-size="14" font-weight="400" fill="#d8d9da" stroke="#d8d9da" stroke-width="0.2" textLength="26.6" lengthAdjust="spacingAndGlyphs">11.8</text></g>
<g transform="translate(1530.54,879.22) rotate(86.8)"><text x="-13.3" y="5" font-size="14" font-weight="400" fill="#d8d9da" stroke="#d8d9da" stroke-width="0.2" textLength="26.6" lengthAdjust="spacingAndGlyphs">15.5</text></g>
<g transform="translate(1525.35,917.84) rotate(108.5)"><text x="-6.75" y="5" font-size="14" font-weight="400" fill="#d8d9da" stroke="#d8d9da" stroke-width="0.2" textLength="13.5" lengthAdjust="spacingAndGlyphs">16</text></g><text x="1366.7" y="904.9" font-size="36" font-weight="700" fill="#d8d9da" stroke="#d8d9da" stroke-width="0.6" textLength="121.1" lengthAdjust="spacingAndGlyphs">12.80 V</text></svg></div>
<div class="panel" style="left:1588px;top:717px;width:302px;height:228px"><svg width="302" height="228" viewBox="1589 718 302 228"><text x="1648.45" y="737.1" font-size="13" font-weight="400" fill="#d8d9da" stroke="#d8d9da" stroke-width="0.55" textLength="182.7" lengthAdjust="spacingAndGlyphs">EPSOLAR-Temperatur (Celsius)</text><path d="M1640,754.5 H1868.9 M1640,788.5 H1868.9 M1640,823.5 H1868.9 M1640,858.5 H1868.9 M1640,892.5 H1868.9" stroke="rgba(255,255,255,0.17)" stroke-width="1" fill="none"/>
<path d="M1677.5,754 V893 M1738.5,754 V893 M1799.5,754 V893 M1860.5,754 V893" stroke="rgba(255,255,255,0.17)" stroke-width="1" fill="none"/>
<path d="M1639.6,892.5 L1639.6,878.9 C1640.09,873.57 1642.35,840.67 1643.3,838.9 C1644.25,837.13 1645.95,859.68 1646.7,865.6 C1647.45,871.52 1648.07,891.15 1648.9,883.3 C1649.73,875.45 1651.86,807.29 1652.9,806.7 C1653.94,806.11 1655.81,874.31 1656.7,878.9 C1657.59,883.49 1658.92,841.99 1659.6,841.1 C1660.28,840.21 1661.21,863.91 1661.8,872.2 L1688.9,784.4 C1689.3,778.77 1689.67,757.22 1690.4,763.3 C1691.13,769.38 1693.27,829.25 1694.4,830 C1695.53,830.75 1697.91,764.31 1698.9,768.9 C1699.89,773.49 1700.83,864.55 1701.8,864.4 C1702.77,864.25 1705.11,770.91 1706.2,767.8 C1707.29,764.69 1708.96,837.99 1710,841.1 C1711.04,844.21 1713.11,788.73 1714,791.1 C1714.89,793.47 1715.69,856.67 1716.7,858.9 C1717.71,861.13 1720.51,805.88 1721.6,807.8 C1722.69,809.72 1723.99,872.71 1724.9,873.3 C1725.81,873.89 1727.51,816.2 1728.4,812.2 C1729.29,808.2 1730.71,848.63 1731.6,843.3 C1732.49,837.97 1733.98,771.89 1735.1,772.2 C1736.22,772.51 1738.76,842.33 1740,845.6 C1741.24,848.87 1743.36,796.26 1744.4,796.7 C1745.44,797.14 1746.91,846.54 1747.8,848.9 C1748.69,851.26 1750.06,811.29 1751.1,814.4 C1752.14,817.51 1754.47,873.23 1755.6,872.2 C1756.73,871.17 1758.57,808.91 1759.6,806.7 C1760.63,804.49 1762.35,852.05 1763.3,855.6 C1764.25,859.15 1765.71,830.05 1766.7,833.3 C1767.69,836.55 1769.61,883.11 1770.7,880 C1771.79,876.89 1773.9,809.41 1774.9,810 C1775.9,810.59 1777.28,882.77 1778.2,884.4 C1779.12,886.03 1780.81,823.68 1781.8,822.2 C1782.79,820.72 1784.65,870.49 1785.6,873.3 C1786.55,876.11 1787.87,842.99 1788.9,843.3 C1789.93,843.61 1792.26,874.56 1793.3,875.6 C1794.34,876.64 1795.67,852.51 1796.7,851.1 C1797.73,849.69 1799.91,869.89 1801,865 C1802.09,860.11 1803.85,813.59 1804.9,814.4 C1805.95,815.21 1807.83,871.98 1808.9,871.1 C1809.97,870.22 1811.86,808.84 1812.9,807.8 C1813.94,806.76 1815.7,858.26 1816.7,863.3 C1817.7,868.34 1819.37,843.52 1820.4,845.6 C1821.43,847.68 1823.41,880.98 1824.4,878.9 C1825.39,876.82 1826.91,831.77 1827.8,830 C1828.69,828.23 1830.22,856.11 1831.1,865.6 L1861.1,862.2 C1861.69,857.16 1862.55,846.85 1863.3,843.3 C1864.05,839.75 1865.95,832.63 1866.7,835.6 C1867.45,838.57 1868.61,861.6 1868.9,865.6 L1868.9,892.5 Z" fill="rgba(126,178,109,0.8)"/>
<path d="M1639.6,878.9 C1640.09,873.57 1642.35,840.67 1643.3,838.9 C1644.25,837.13 1645.95,859.68 1646.7,865.6 C1647.45,871.52 1648.07,891.15 1648.9,883.3 C1649.73,875.45 1651.86,807.29 1652.9,806.7 C1653.94,806.11 1655.81,874.31 1656.7,878.9 C1657.59,883.49 1658.92,841.99 1659.6,841.1 C1660.28,840.21 1661.21,863.91 1661.8,872.2 L1688.9,784.4 C1689.3,778.77 1689.67,757.22 1690.4,763.3 C1691.13,769.38 1693.27,829.25 1694.4,830 C1695.53,830.75 1697.91,764.31 1698.9,768.9 C1699.89,773.49 1700.83,864.55 1701.8,864.4 C1702.77,864.25 1705.11,770.91 1706.2,767.8 C1707.29,764.69 1708.96,837.99 1710,841.1 C1711.04,844.21 1713.11,788.73 1714,791.1 C1714.89,793.47 1715.69,856.67 1716.7,858.9 C1717.71,861.13 1720.51,805.88 1721.6,807.8 C1722.69,809.72 1723.99,872.71 1724.9,873.3 C1725.81,873.89 1727.51,816.2 1728.4,812.2 C1729.29,808.2 1730.71,848.63 1731.6,843.3 C1732.49,837.97 1733.98,771.89 1735.1,772.2 C1736.22,772.51 1738.76,842.33 1740,845.6 C1741.24,848.87 1743.36,796.26 1744.4,796.7 C1745.44,797.14 1746.91,846.54 1747.8,848.9 C1748.69,851.26 1750.06,811.29 1751.1,814.4 C1752.14,817.51 1754.47,873.23 1755.6,872.2 C1756.73,871.17 1758.57,808.91 1759.6,806.7 C1760.63,804.49 1762.35,852.05 1763.3,855.6 C1764.25,859.15 1765.71,830.05 1766.7,833.3 C1767.69,836.55 1769.61,883.11 1770.7,880 C1771.79,876.89 1773.9,809.41 1774.9,810 C1775.9,810.59 1777.28,882.77 1778.2,884.4 C1779.12,886.03 1780.81,823.68 1781.8,822.2 C1782.79,820.72 1784.65,870.49 1785.6,873.3 C1786.55,876.11 1787.87,842.99 1788.9,843.3 C1789.93,843.61 1792.26,874.56 1793.3,875.6 C1794.34,876.64 1795.67,852.51 1796.7,851.1 C1797.73,849.69 1799.91,869.89 1801,865 C1802.09,860.11 1803.85,813.59 1804.9,814.4 C1805.95,815.21 1807.83,871.98 1808.9,871.1 C1809.97,870.22 1811.86,808.84 1812.9,807.8 C1813.94,806.76 1815.7,858.26 1816.7,863.3 C1817.7,868.34 1819.37,843.52 1820.4,845.6 C1821.43,847.68 1823.41,880.98 1824.4,878.9 C1825.39,876.82 1826.91,831.77 1827.8,830 C1828.69,828.23 1830.22,856.11 1831.1,865.6 L1861.1,862.2 C1861.69,857.16 1862.55,846.85 1863.3,843.3 C1864.05,839.75 1865.95,832.63 1866.7,835.6 C1867.45,838.57 1868.61,861.6 1868.9,865.6" stroke="#7eb26d" stroke-width="3.0" fill="none" stroke-linejoin="round" stroke-linecap="round"/>
<text x="1600.1" y="757.8" font-size="11.5" font-weight="400" fill="#c8c9ca" stroke="#c8c9ca" stroke-width="0.3" textLength="34.3" lengthAdjust="spacingAndGlyphs">35.0 °C</text>
<text x="1600.1" y="791.8" font-size="11.5" font-weight="400" fill="#c8c9ca" stroke="#c8c9ca" stroke-width="0.3" textLength="34.3" lengthAdjust="spacingAndGlyphs">30.0 °C</text>
<text x="1600.1" y="826.8" font-size="11.5" font-weight="400" fill="#c8c9ca" stroke="#c8c9ca" stroke-width="0.3" textLength="34.3" lengthAdjust="spacingAndGlyphs">25.0 °C</text>
<text x="1600.1" y="861.8" font-size="11.5" font-weight="400" fill="#c8c9ca" stroke="#c8c9ca" stroke-width="0.3" textLength="34.3" lengthAdjust="spacingAndGlyphs">20.0 °C</text>
<text x="1600.1" y="895.8" font-size="11.5" font-weight="400" fill="#c8c9ca" stroke="#c8c9ca" stroke-width="0.3" textLength="34.3" lengthAdjust="spacingAndGlyphs">15.0 °C</text>
<text x="1669.5" y="910" font-size="11.5" font-weight="400" fill="#c8c9ca" stroke="#c8c9ca" stroke-width="0.3" textLength="16" lengthAdjust="spacingAndGlyphs">7/8</text>
<text x="1728" y="910" font-size="11.5" font-weight="400" fill="#c8c9ca" stroke="#c8c9ca" stroke-width="0.3" textLength="21" lengthAdjust="spacingAndGlyphs">7/16</text>
<text x="1789" y="910" font-size="11.5" font-weight="400" fill="#c8c9ca" stroke="#c8c9ca" stroke-width="0.3" textLength="21" lengthAdjust="spacingAndGlyphs">7/24</text>
<text x="1852.5" y="910" font-size="11.5" font-weight="400" fill="#c8c9ca" stroke="#c8c9ca" stroke-width="0.3" textLength="16" lengthAdjust="spacingAndGlyphs">8/1</text><rect x="1610" y="928.3" width="11.8" height="4" rx="2" fill="#7eb26d"/><text x="1625.6" y="933.1" font-size="11.5" font-weight="400" fill="#d8d9da" stroke="#d8d9da" stroke-width="0.3" textLength="196.6" lengthAdjust="spacingAndGlyphs">Charger-temperature.last  Current: 19 °C</text></svg></div>
<div class="panel" style="left:20px;top:957px;width:302px;height:108px"><svg width="302" height="108" viewBox="21 958 302 108"><text x="56" y="977.1" font-size="13" font-weight="400" fill="#d8d9da" stroke="#d8d9da" stroke-width="0.55" textLength="231" lengthAdjust="spacingAndGlyphs">Solar Produktion gesamt (Seit 11/2016)</text><text x="92.6" y="1037.5" font-size="46.3" font-weight="700" fill="#d8d9da" stroke="#d8d9da" stroke-width="1.1" textLength="159.6" lengthAdjust="spacingAndGlyphs">1.21 GW</text></svg></div>
<div class="panel" style="left:334px;top:957px;width:302px;height:108px"><svg width="302" height="108" viewBox="335 958 302 108"><text x="392.6" y="977.1" font-size="13" font-weight="400" fill="#d8d9da" stroke="#d8d9da" stroke-width="0.55" textLength="186" lengthAdjust="spacingAndGlyphs">Solar Produktion in diesem Jahr</text><text x="406.1" y="1037.5" font-size="46.3" font-weight="700" fill="#d8d9da" stroke="#d8d9da" stroke-width="1.1" textLength="159.9" lengthAdjust="spacingAndGlyphs">1.24 GW</text></svg></div>
<div class="panel" style="left:647px;top:957px;width:302px;height:108px"><svg width="302" height="108" viewBox="648 958 302 108"><text x="700.2" y="977.1" font-size="13" font-weight="400" fill="#d8d9da" stroke="#d8d9da" stroke-width="0.55" textLength="196.9" lengthAdjust="spacingAndGlyphs">Solar Produktion in diesem Monat</text><text x="711" y="1037.5" font-size="46.3" font-weight="700" fill="#d8d9da" stroke="#d8d9da" stroke-width="1.1" textLength="177.7" lengthAdjust="spacingAndGlyphs">11.79 kW</text></svg></div>
<div class="panel" style="left:961px;top:957px;width:302px;height:108px"><svg width="302" height="108" viewBox="962 958 302 108"><text x="999.2" y="977.1" font-size="13" font-weight="400" fill="#d8d9da" stroke="#d8d9da" stroke-width="0.55" textLength="227.3" lengthAdjust="spacingAndGlyphs">Solar Verbrauch gesamt (Seit 10/2016)</text><text x="1024.8" y="1037.5" font-size="46.3" font-weight="700" fill="#d8d9da" stroke="#d8d9da" stroke-width="1.1" textLength="177.8" lengthAdjust="spacingAndGlyphs">11.79 kW</text></svg></div>
<div class="panel" style="left:1275px;top:957px;width:302px;height:108px"><svg width="302" height="108" viewBox="1276 958 302 108"><text x="1335.6" y="977.1" font-size="13" font-weight="400" fill="#d8d9da" stroke="#d8d9da" stroke-width="0.55" textLength="182.2" lengthAdjust="spacingAndGlyphs">Solar Verbrauch in diesem Jahr</text><text x="1331" y="1037.5" font-size="46.3" font-weight="700" fill="#d8d9da" stroke="#d8d9da" stroke-width="1.1" textLength="193.2" lengthAdjust="spacingAndGlyphs">60.31 MW</text></svg></div>
<div class="panel" style="left:1588px;top:957px;width:302px;height:108px"><svg width="302" height="108" viewBox="1589 958 302 108"><text x="1642.6" y="977.1" font-size="13" font-weight="400" fill="#d8d9da" stroke="#d8d9da" stroke-width="0.55" textLength="193.5" lengthAdjust="spacingAndGlyphs">Solar Verbrauch in diesem Monat</text><text x="1693.6" y="1037.5" font-size="46.3" font-weight="700" fill="#d8d9da" stroke="#d8d9da" stroke-width="1.1" textLength="92.9" lengthAdjust="spacingAndGlyphs">0 kW</text></svg></div>
<div class="scroll"></div>
</body></html>
